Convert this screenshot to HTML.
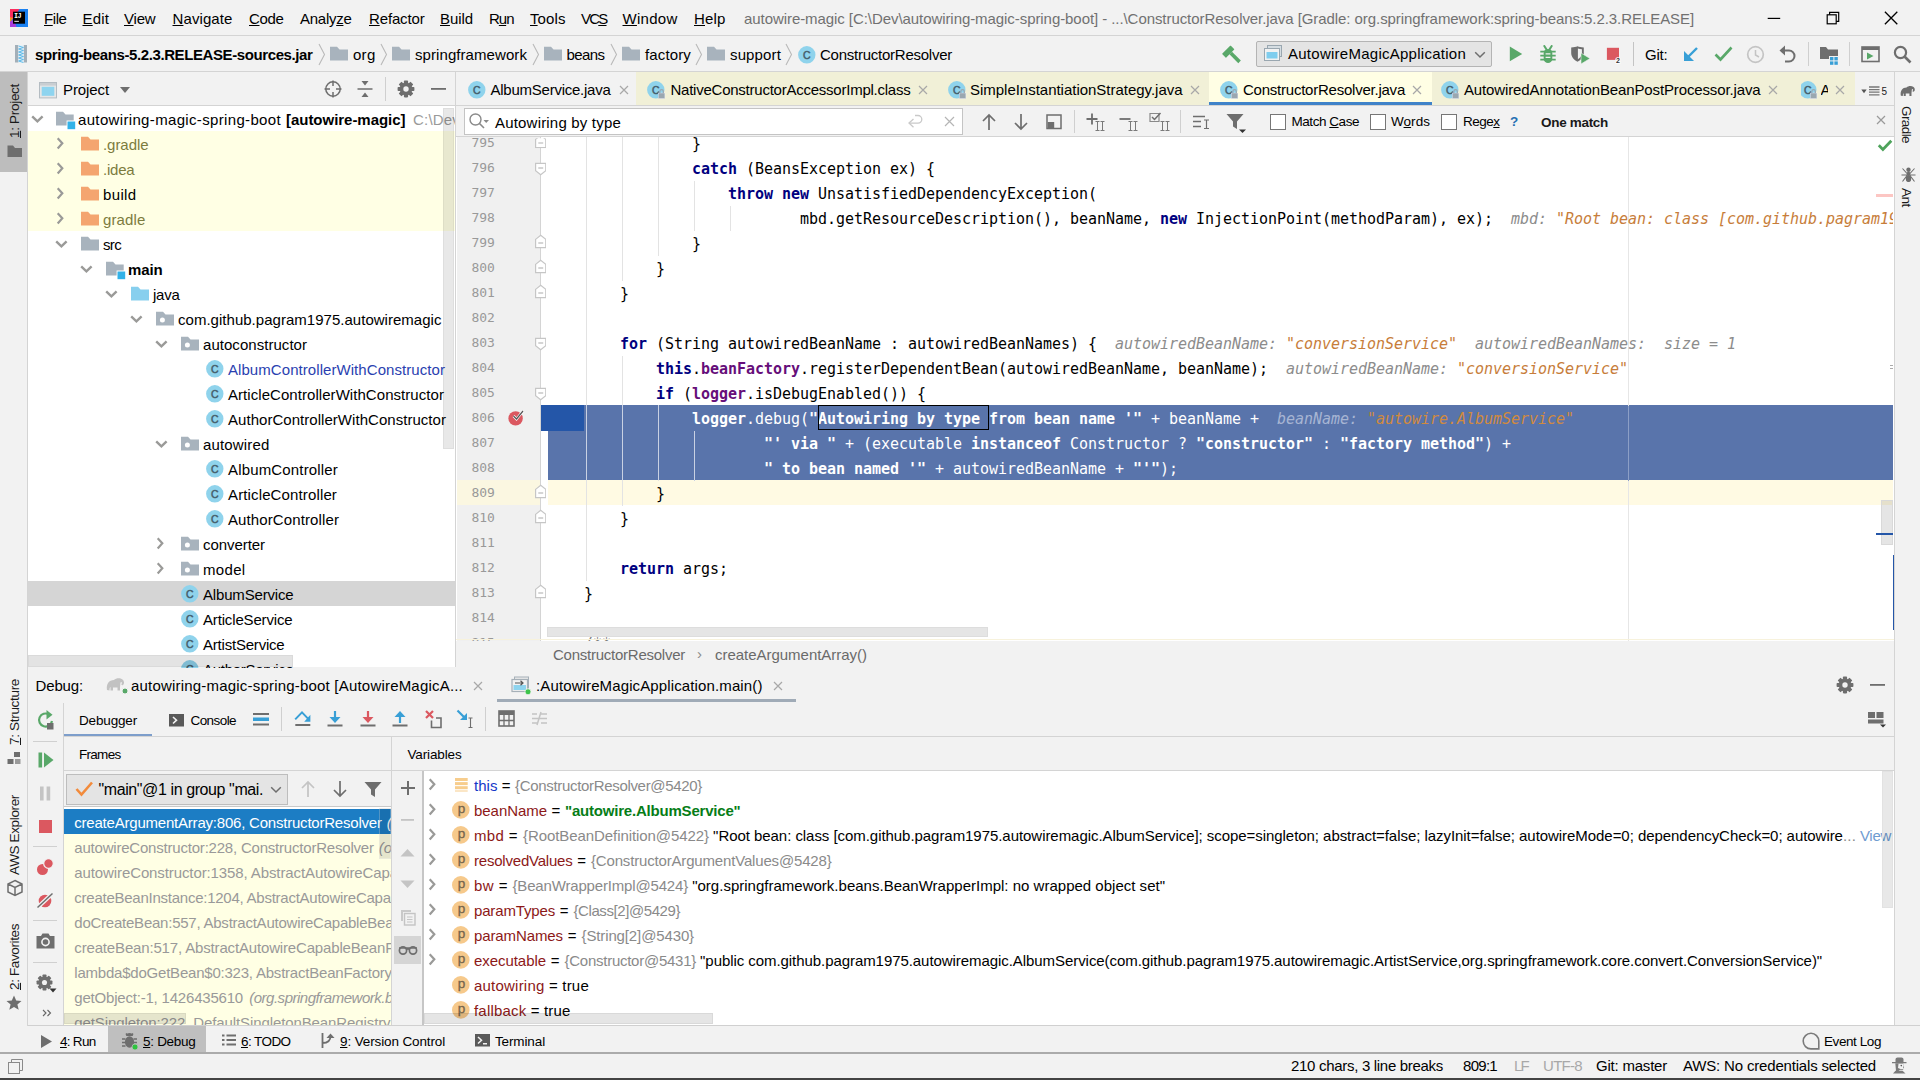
<!DOCTYPE html>
<html><head><meta charset="utf-8"><title>IntelliJ IDEA</title>
<style>
html,body{margin:0;padding:0;}
body{width:1920px;height:1080px;overflow:hidden;background:#f2f2f2;position:relative;font-family:'Liberation Sans', sans-serif;font-size:15px;}
body>div,body>svg{position:absolute;}
.t{white-space:pre;}
u{text-decoration:underline;text-underline-offset:0.8px;text-decoration-thickness:1px;}
</style></head><body>
<div style="left:0px;top:0px;width:1920px;height:36px;background:#f2f2f2;"></div>
<div style="left:0px;top:35px;width:1920px;height:1px;background:#d4d4d4;"></div>
<svg style="left:10px;top:9px;" width="18" height="18" viewBox="0 0 18 18"><rect width="18" height="18" fill="#1a80f0"/><path d="M0 0 H9.5 L5 7 L0 13 Z" fill="#fb2c5e"/><path d="M0 8 L3 9 L0 14 Z" fill="#f98c1e"/><path d="M0 12.5 L4 11 L6.5 18 H0 Z" fill="#a73ddc"/><rect x="3" y="2.7" width="12" height="12" fill="#000"/><rect x="4.3" y="11.8" width="4.6" height="1.1" fill="#ddd"/><text x="4" y="9.3" font-size="6.8" font-weight="bold" fill="#fff" font-family="Liberation Mono, monospace" letter-spacing="-0.6">IJ</text></svg>
<div class="t" style="left:44px;top:8.5px;height:20px;line-height:20px;font-size:15px;color:#000;letter-spacing:-0.418px;"><u>F</u>ile</div>
<div class="t" style="left:82.5px;top:8.5px;height:20px;line-height:20px;font-size:15px;color:#000;letter-spacing:0.16px;"><u>E</u>dit</div>
<div class="t" style="left:124px;top:8.5px;height:20px;line-height:20px;font-size:15px;color:#000;letter-spacing:-0.188px;"><u>V</u>iew</div>
<div class="t" style="left:172.5px;top:8.5px;height:20px;line-height:20px;font-size:15px;color:#000;letter-spacing:0.1px;"><u>N</u>avigate</div>
<div class="t" style="left:249px;top:8.5px;height:20px;line-height:20px;font-size:15px;color:#000;letter-spacing:-0.34px;"><u>C</u>ode</div>
<div class="t" style="left:300px;top:8.5px;height:20px;line-height:20px;font-size:15px;color:#000;letter-spacing:-0.268px;">Analy<u>z</u>e</div>
<div class="t" style="left:369px;top:8.5px;height:20px;line-height:20px;font-size:15px;color:#000;letter-spacing:-0.15px;"><u>R</u>efactor</div>
<div class="t" style="left:440px;top:8.5px;height:20px;line-height:20px;font-size:15px;color:#000;letter-spacing:-0.072px;"><u>B</u>uild</div>
<div class="t" style="left:489px;top:8.5px;height:20px;line-height:20px;font-size:15px;color:#000;letter-spacing:-1.01px;">R<u>u</u>n</div>
<div class="t" style="left:530px;top:8.5px;height:20px;line-height:20px;font-size:15px;color:#000;letter-spacing:0.094px;"><u>T</u>ools</div>
<div class="t" style="left:581px;top:8.5px;height:20px;line-height:20px;font-size:15px;color:#000;letter-spacing:-1.781px;">VC<u>S</u></div>
<div class="t" style="left:622.5px;top:8.5px;height:20px;line-height:20px;font-size:15px;color:#000;letter-spacing:0.273px;"><u>W</u>indow</div>
<div class="t" style="left:694px;top:8.5px;height:20px;line-height:20px;font-size:15px;color:#000;letter-spacing:0.16px;"><u>H</u>elp</div>
<div class="t" style="left:744px;top:8.5px;height:20px;line-height:20px;font-size:15px;color:#717171;letter-spacing:-0.068px;">autowire-magic [C:\Dev\autowiring-magic-spring-boot] - ...\ConstructorResolver.java [Gradle: org.springframework:spring-beans:5.2.3.RELEASE]</div>
<svg style="left:1767px;top:17px;" width="14" height="3" viewBox="0 0 14 3"><path d="M0.7 1.4 H13.2" stroke="#000" stroke-width="1.2"/></svg>
<svg style="left:1826px;top:11px;" width="14" height="14" viewBox="0 0 14 14"><rect x="1.2" y="3.8" width="9" height="9" fill="none" stroke="#000" stroke-width="1.2"/><path d="M3.6 3.8 V1.3 H12.7 V10.4 H10.2" fill="none" stroke="#000" stroke-width="1.2"/></svg>
<svg style="left:1884px;top:11px;" width="14" height="14" viewBox="0 0 14 14"><path d="M0.9 0.8 L13.3 13.2 M13.3 0.8 L0.9 13.2" stroke="#000" stroke-width="1.3"/></svg>
<div style="left:0px;top:36px;width:1920px;height:36px;background:#f2f2f2;"></div>
<div style="left:0px;top:71px;width:1920px;height:1px;background:#d4d4d4;"></div>
<svg style="left:15px;top:45.3px;" width="12" height="17.5" viewBox="0 0 12 17.5"><rect x="0" y="0" width="3.4" height="17.5" fill="#a3afb8"/><rect x="8.6" y="0" width="3.4" height="17.5" fill="#a3afb8"/><rect x="3.4" y="0" width="5.2" height="17.5" fill="#e4f1f8"/><path d="M3.6 1 L8.4 2.5 M3.6 4 L8.4 2.5 M3.6 4 L8.4 5.5 M3.6 7 L8.4 5.5 M3.6 7 L8.4 8.5 M3.6 10 L8.4 8.5 M3.6 10 L8.4 11.5 M3.6 13 L8.4 11.5 M3.6 13 L8.4 14.5 M3.6 16 L8.4 14.5 M3.6 16 L8.4 17.5" stroke="#4fb3e6" stroke-width="0.9" fill="none"/></svg>
<div class="t" style="left:35px;top:44.5px;height:20px;line-height:20px;font-size:15px;color:#000;font-weight:bold;letter-spacing:-0.398px;">spring-beans-5.2.3.RELEASE-sources.jar</div>
<svg style="left:317.5px;top:43px;" width="8" height="23" viewBox="0 0 8 23"><path d="M1 1 L6.5 11.5 L1 22" fill="none" stroke="#b9b9b9" stroke-width="1.1"/></svg>
<svg style="left:330px;top:46.1px;" width="18" height="15" viewBox="0 0 18 15"><path d="M0 0.8 H7 L9.5 3.4 H18 V14.5 H0 Z" fill="#a8b3bd"/></svg>
<div class="t" style="left:353px;top:44.5px;height:20px;line-height:20px;font-size:15px;color:#000;letter-spacing:0.271px;">org</div>
<svg style="left:380px;top:43px;" width="8" height="23" viewBox="0 0 8 23"><path d="M1 1 L6.5 11.5 L1 22" fill="none" stroke="#b9b9b9" stroke-width="1.1"/></svg>
<svg style="left:392px;top:46.1px;" width="18" height="15" viewBox="0 0 18 15"><path d="M0 0.8 H7 L9.5 3.4 H18 V14.5 H0 Z" fill="#a8b3bd"/></svg>
<div class="t" style="left:415px;top:44.5px;height:20px;line-height:20px;font-size:15px;color:#000;letter-spacing:0.075px;">springframework</div>
<svg style="left:532px;top:43px;" width="8" height="23" viewBox="0 0 8 23"><path d="M1 1 L6.5 11.5 L1 22" fill="none" stroke="#b9b9b9" stroke-width="1.1"/></svg>
<svg style="left:544px;top:46.1px;" width="18" height="15" viewBox="0 0 18 15"><path d="M0 0.8 H7 L9.5 3.4 H18 V14.5 H0 Z" fill="#a8b3bd"/></svg>
<div class="t" style="left:566.5px;top:44.5px;height:20px;line-height:20px;font-size:15px;color:#000;letter-spacing:-0.575px;">beans</div>
<svg style="left:610px;top:43px;" width="8" height="23" viewBox="0 0 8 23"><path d="M1 1 L6.5 11.5 L1 22" fill="none" stroke="#b9b9b9" stroke-width="1.1"/></svg>
<svg style="left:622px;top:46.1px;" width="18" height="15" viewBox="0 0 18 15"><path d="M0 0.8 H7 L9.5 3.4 H18 V14.5 H0 Z" fill="#a8b3bd"/></svg>
<div class="t" style="left:645px;top:44.5px;height:20px;line-height:20px;font-size:15px;color:#000;letter-spacing:0.141px;">factory</div>
<svg style="left:695px;top:43px;" width="8" height="23" viewBox="0 0 8 23"><path d="M1 1 L6.5 11.5 L1 22" fill="none" stroke="#b9b9b9" stroke-width="1.1"/></svg>
<svg style="left:707px;top:46.1px;" width="18" height="15" viewBox="0 0 18 15"><path d="M0 0.8 H7 L9.5 3.4 H18 V14.5 H0 Z" fill="#a8b3bd"/></svg>
<div class="t" style="left:730px;top:44.5px;height:20px;line-height:20px;font-size:15px;color:#000;letter-spacing:0.136px;">support</div>
<svg style="left:785px;top:43px;" width="8" height="23" viewBox="0 0 8 23"><path d="M1 1 L6.5 11.5 L1 22" fill="none" stroke="#b9b9b9" stroke-width="1.1"/></svg>
<svg style="left:797.5px;top:45.5px;" width="19" height="18.5" viewBox="0 0 19 18.5"><circle cx="8.8" cy="8.8" r="8.7" fill="#8fd3ec"/><text x="8.7" y="12.6" font-family="Liberation Sans, sans-serif" font-size="10.5" text-anchor="middle" fill="#46606e" stroke="#46606e" stroke-width="0.5">C</text></svg>
<div class="t" style="left:820px;top:44.5px;height:20px;line-height:20px;font-size:15px;color:#000;letter-spacing:-0.248px;">ConstructorResolver</div>
<svg style="left:1222px;top:44px;" width="22" height="22" viewBox="0 0 22 22"><g transform="rotate(-45 11 11)"><rect x="4" y="2.5" width="12" height="5.5" rx="0.5" fill="#59a869"/><rect x="9" y="8" width="3.6" height="12.5" fill="#59a869"/></g></svg>
<div style="left:1256px;top:40.5px;width:236px;height:26.5px;background:#e4e4e4;border:1px solid #b4b4b4;box-sizing:border-box;border-radius:2px;"></div>
<svg style="left:1264px;top:45px;" width="19" height="18" viewBox="0 0 19 18"><rect x="3.5" y="0.5" width="14" height="11" fill="#d5dde2" stroke="#9aa7b0"/><rect x="0.5" y="3.5" width="15" height="12" fill="#f2f2f2" stroke="#9aa7b0"/><rect x="2.5" y="7" width="11" height="6.5" fill="#7fcdee"/></svg>
<div class="t" style="left:1288px;top:44.0px;height:20px;line-height:20px;font-size:15px;color:#000;letter-spacing:0.26px;">AutowireMagicApplication</div>
<svg style="left:1474px;top:50.5px;" width="12" height="8" viewBox="0 0 12 8"><path d="M1.2 1.2 L6 6 L10.8 1.2" fill="none" stroke="#6e6e6e" stroke-width="1.5"/></svg>
<svg style="left:1509px;top:46px;" width="14" height="16" viewBox="0 0 14 16"><path d="M0.8 0.6 L13.2 8 L0.8 15.3 Z" fill="#59a869"/></svg>
<svg style="left:1540px;top:45px;" width="16" height="18.5" viewBox="0 0 16 18.5"><rect x="3.7" y="4" width="8.6" height="14" rx="4.3" fill="#59a869"/><path d="M0.3 6.6 H15.7 M0.3 10.6 H15.7 M0.3 14.6 H15.7" stroke="#59a869" stroke-width="1.7"/><path d="M4.3 1 L6.6 4.6 M11.7 1 L9.4 4.6" stroke="#59a869" stroke-width="2" stroke-linecap="round"/><path d="M5.6 8.8 H10.4 M5.6 12.4 H10.4" stroke="#f2f2f2" stroke-width="1.3"/></svg>
<svg style="left:1571px;top:46px;" width="20" height="19" viewBox="0 0 20 19"><path d="M0.2 1.6 C3 1.4 5 0.9 6.5 0.3 C8 0.9 10 1.4 12.8 1.6 V7 C12.8 11 10 14 6.5 15.7 C3 14 0.2 11 0.2 7 Z" fill="#6e6e6e"/><path d="M6.9 2.6 C8.3 3 9.6 3.2 10.9 3.3 V7 C10.9 9.6 9.3 11.8 6.9 13.2 Z" fill="#f2f2f2"/><path d="M10 7 L19 12.5 L10 18 Z" fill="#59a869" stroke="#f2f2f2" stroke-width="0.6"/></svg>
<svg style="left:1606px;top:47px;" width="16" height="17" viewBox="0 0 16 17"><rect x="0.9" y="0.8" width="12.1" height="12.1" fill="#db5860"/><text x="10" y="16" font-size="7" font-weight="bold" fill="#333" stroke="#fff" stroke-width="1.6" paint-order="stroke" font-family="Liberation Sans, sans-serif">2</text></svg>
<div style="left:1633px;top:42px;width:1px;height:24px;background:#c4c4c4;"></div>
<div class="t" style="left:1645px;top:44.5px;height:20px;line-height:20px;font-size:15px;color:#000;letter-spacing:-0.211px;">Git:</div>
<svg style="left:1682px;top:46px;" width="17" height="17" viewBox="0 0 17 17"><path d="M15 2 L3.5 13.5" stroke="#389fd6" stroke-width="2.4"/><path d="M2 5 V15 H12 Z" fill="#389fd6"/></svg>
<svg style="left:1714px;top:46px;" width="19" height="16" viewBox="0 0 19 16"><path d="M1.5 8.5 L6.5 13.5 L17.5 1.5" fill="none" stroke="#59a869" stroke-width="2.6"/></svg>
<svg style="left:1746px;top:45px;" width="19" height="19" viewBox="0 0 19 19"><circle cx="9.5" cy="9.5" r="7.8" fill="none" stroke="#c4c4c4" stroke-width="1.7"/><path d="M9.5 5 V10 L13 12" fill="none" stroke="#c4c4c4" stroke-width="1.5"/></svg>
<svg style="left:1778px;top:45px;" width="20" height="19" viewBox="0 0 20 19"><path d="M4.5 5.5 H11 a5.5 5.5 0 0 1 0 11 H7" fill="none" stroke="#6e6e6e" stroke-width="2"/><path d="M7 0.5 L1.5 5.5 L7 10.5 Z" fill="#6e6e6e"/></svg>
<div style="left:1808px;top:42px;width:1px;height:24px;background:#cfcfcf;"></div>
<svg style="left:1820px;top:46px;" width="20" height="19" viewBox="0 0 20 19"><path d="M0 1 H6 L8 3.5 H18 V10 H9 V13 H0 Z" fill="#6e6e6e"/><rect x="10" y="11" width="3.4" height="3.4" fill="#389fd6"/><rect x="14.4" y="11" width="3.4" height="3.4" fill="#389fd6"/><rect x="10" y="15.4" width="3.4" height="3.4" fill="#389fd6"/><rect x="14.4" y="15.4" width="3.4" height="3.4" fill="#389fd6"/></svg>
<div style="left:1849px;top:42px;width:1px;height:24px;background:#cfcfcf;"></div>
<svg style="left:1861px;top:46px;" width="19" height="17" viewBox="0 0 19 17"><rect x="1" y="1" width="17" height="14.5" fill="none" stroke="#6e6e6e" stroke-width="1.6"/><rect x="1" y="1" width="17" height="3" fill="#6e6e6e"/><path d="M6 6.5 L12.5 10 L6 13.5 Z" fill="#59a869"/></svg>
<svg style="left:1893px;top:45px;" width="19" height="19" viewBox="0 0 19 19"><circle cx="7.5" cy="7.5" r="5.6" fill="none" stroke="#6e6e6e" stroke-width="2.2"/><path d="M11.5 11.5 L17.5 17.5" stroke="#6e6e6e" stroke-width="2.6"/></svg>
<div style="left:0px;top:72px;width:27px;height:954px;background:#f2f2f2;"></div>
<div style="left:27px;top:72px;width:1px;height:954px;background:#d4d4d4;"></div>
<div style="left:0px;top:72px;width:27px;height:100px;background:#bdbdbd;"></div>
<div class="t" style="left:0px;top:-10.0px;height:20px;line-height:20px;font-size:13.5px;color:#1a1a1a;letter-spacing:-0.303px;left:14.5px;top:137.5px;transform-origin:0 0;transform:rotate(-90deg) translate(0,-10px);"><u>1</u>: Project</div>
<svg style="left:7px;top:144.5px;" width="16" height="13" viewBox="0 0 16 13"><path d="M0.5 0.5 H6 L8 3 H15 V12 H0.5 Z" fill="#6e6e6e"/></svg>
<div class="t" style="left:0px;top:-10.0px;height:20px;line-height:20px;font-size:13.5px;color:#1a1a1a;letter-spacing:-0.315px;left:14.5px;top:745px;transform-origin:0 0;transform:rotate(-90deg) translate(0,-10px);"><u>7</u>: Structure</div>
<svg style="left:7px;top:752px;" width="14" height="12" viewBox="0 0 14 12"><rect x="7" y="0" width="6" height="5" fill="#6e6e6e"/><rect x="0.5" y="7" width="6" height="5" fill="#6e6e6e"/><rect x="8" y="7" width="5.5" height="5" fill="#9a9a9a"/></svg>
<div class="t" style="left:0px;top:-10.0px;height:20px;line-height:20px;font-size:13.5px;color:#1a1a1a;letter-spacing:-0.357px;left:14.5px;top:874.5px;transform-origin:0 0;transform:rotate(-90deg) translate(0,-10px);">AWS Explorer</div>
<svg style="left:5.5px;top:878.5px;" width="18" height="18" viewBox="0 0 18 18"><path d="M9 1.5 L16 5 V13 L9 16.5 L2 13 V5 Z M2 5 L9 8.5 L16 5 M9 8.5 V16.5" fill="none" stroke="#6e6e6e" stroke-width="1.5"/></svg>
<div class="t" style="left:0px;top:-10.0px;height:20px;line-height:20px;font-size:13.5px;color:#1a1a1a;letter-spacing:-0.378px;left:14.5px;top:990px;transform-origin:0 0;transform:rotate(-90deg) translate(0,-10px);"><u>2</u>: Favorites</div>
<svg style="left:6px;top:995px;" width="16" height="15" viewBox="0 0 16 15"><path d="M8 0.5 L10.2 5.5 L15.5 6 L11.4 9.5 L12.7 14.8 L8 12 L3.3 14.8 L4.6 9.5 L0.5 6 L5.8 5.5 Z" fill="#6e6e6e"/></svg>
<div style="left:28px;top:72px;width:427px;height:34px;background:#f2f2f2;"></div>
<div style="left:28px;top:105px;width:428px;height:1px;background:#d4d4d4;"></div>
<div style="left:455px;top:72px;width:1px;height:595px;background:#d4d4d4;"></div>
<div style="left:28px;top:106px;width:427px;height:561px;background:#fff;"></div>
<svg style="left:39px;top:81.5px;" width="18" height="17" viewBox="0 0 18 17"><rect x="0.5" y="0.5" width="17" height="15.4" fill="#e6e6e6" stroke="#b4bcc2"/><rect x="1" y="1" width="16" height="2.6" fill="#c9ced2"/><rect x="2.7" y="4.8" width="12.6" height="9" fill="#8ed4ef"/></svg>
<div class="t" style="left:63px;top:79.5px;height:20px;line-height:20px;font-size:15px;color:#000;letter-spacing:-0.098px;">Project</div>
<svg style="left:119px;top:86px;" width="12" height="8" viewBox="0 0 12 8"><path d="M1 1 H11 L6 7 Z" fill="#6e6e6e"/></svg>
<svg style="left:324px;top:80px;" width="18" height="18" viewBox="0 0 18 18"><circle cx="9" cy="9" r="7.2" fill="none" stroke="#6e6e6e" stroke-width="1.5"/><path d="M9 0.5 V6 M9 12 V17.5 M0.5 9 H6 M12 9 H17.5" stroke="#6e6e6e" stroke-width="1.5"/></svg>
<svg style="left:357px;top:80px;" width="16" height="18" viewBox="0 0 16 18"><path d="M0.5 9 H15.5" stroke="#6e6e6e" stroke-width="1.5"/><path d="M4.5 1 H11.5 L8 5.5 Z M4.5 17 H11.5 L8 12.5 Z" fill="#6e6e6e"/></svg>
<div style="left:385px;top:77px;width:1px;height:24px;background:#cfcfcf;"></div>
<svg style="left:397px;top:80px;" width="18" height="18" viewBox="0 0 18 18"><rect x="6.9" y="0.6" width="4.2" height="16.8" rx="0.8" transform="rotate(0 9 9)" fill="#6e6e6e"/><rect x="6.9" y="0.6" width="4.2" height="16.8" rx="0.8" transform="rotate(45 9 9)" fill="#6e6e6e"/><rect x="6.9" y="0.6" width="4.2" height="16.8" rx="0.8" transform="rotate(90 9 9)" fill="#6e6e6e"/><rect x="6.9" y="0.6" width="4.2" height="16.8" rx="0.8" transform="rotate(135 9 9)" fill="#6e6e6e"/><circle cx="9" cy="9" r="6.4" fill="#6e6e6e"/><circle cx="9" cy="9" r="2.7" fill="#f2f2f2"/></svg>
<svg style="left:431px;top:88px;" width="16" height="3" viewBox="0 0 16 3"><rect width="15" height="1.8" fill="#6e6e6e"/></svg>
<div style="left:28px;top:131.2px;width:427px;height:100px;background:#ffffe4;"></div>
<div style="left:28px;top:581.2px;width:427px;height:24.5px;background:#d5d5d5;"></div>
<svg style="left:30.6px;top:114.8px;" width="13" height="8.5" viewBox="0 0 13 8.5"><path d="M1.2 1.3 L6.4 6.3 L11.6 1.3" fill="none" stroke="#9a9a98" stroke-width="2.4"/></svg>
<svg style="left:56px;top:110.7px;" width="20" height="19" viewBox="0 0 20 19"><path d="M0 0.8 H7 L9.5 3.4 H17.7 V9.6 H10.6 V14.5 H0 Z" fill="#a8b3bd"/><rect x="11.5" y="10.5" width="7.7" height="7.7" fill="#33b2e8"/></svg>
<div class="t" style="left:78px;top:109.5px;height:20px;line-height:20px;font-size:15px;color:#000;letter-spacing:0.342px;">autowiring-magic-spring-boot</div>
<div class="t" style="left:286px;top:109.5px;height:20px;line-height:20px;font-size:15px;color:#000;font-weight:bold;letter-spacing:-0.032px;">[autowire-magic]</div>
<div class="t" style="left:413px;top:109.5px;height:20px;line-height:20px;font-size:15px;color:#9a9a9a;letter-spacing:0.193px;width:42px;overflow:hidden;">C:\Dev</div>
<svg style="left:56.4px;top:136.9px;" width="9" height="13" viewBox="0 0 9 13"><path d="M1.7 1.2 L6.3 6.3 L1.7 11.4" fill="none" stroke="#9a9a98" stroke-width="2.2"/></svg>
<svg style="left:81px;top:135.5px;" width="18" height="15" viewBox="0 0 18 15"><path d="M0 0.8 H7 L9.5 3.4 H18 V14.5 H0 Z" fill="#f4a56f"/></svg>
<div class="t" style="left:103px;top:134.5px;height:20px;line-height:20px;font-size:15px;color:#7c7c3e;letter-spacing:-0.054px;">.gradle</div>
<svg style="left:56.4px;top:161.9px;" width="9" height="13" viewBox="0 0 9 13"><path d="M1.7 1.2 L6.3 6.3 L1.7 11.4" fill="none" stroke="#9a9a98" stroke-width="2.2"/></svg>
<svg style="left:81px;top:160.5px;" width="18" height="15" viewBox="0 0 18 15"><path d="M0 0.8 H7 L9.5 3.4 H18 V14.5 H0 Z" fill="#f4a56f"/></svg>
<div class="t" style="left:103px;top:159.5px;height:20px;line-height:20px;font-size:15px;color:#7c7c3e;letter-spacing:-0.206px;">.idea</div>
<svg style="left:56.4px;top:186.9px;" width="9" height="13" viewBox="0 0 9 13"><path d="M1.7 1.2 L6.3 6.3 L1.7 11.4" fill="none" stroke="#9a9a98" stroke-width="2.2"/></svg>
<svg style="left:81px;top:185.5px;" width="18" height="15" viewBox="0 0 18 15"><path d="M0 0.8 H7 L9.5 3.4 H18 V14.5 H0 Z" fill="#f4a56f"/></svg>
<div class="t" style="left:103px;top:184.5px;height:20px;line-height:20px;font-size:15px;color:#000;letter-spacing:0.359px;">build</div>
<svg style="left:56.4px;top:211.9px;" width="9" height="13" viewBox="0 0 9 13"><path d="M1.7 1.2 L6.3 6.3 L1.7 11.4" fill="none" stroke="#9a9a98" stroke-width="2.2"/></svg>
<svg style="left:81px;top:210.5px;" width="18" height="15" viewBox="0 0 18 15"><path d="M0 0.8 H7 L9.5 3.4 H18 V14.5 H0 Z" fill="#f4a56f"/></svg>
<div class="t" style="left:103px;top:209.5px;height:20px;line-height:20px;font-size:15px;color:#7c7c3e;letter-spacing:0.133px;">gradle</div>
<svg style="left:54.6px;top:239.8px;" width="13" height="8.5" viewBox="0 0 13 8.5"><path d="M1.2 1.3 L6.4 6.3 L11.6 1.3" fill="none" stroke="#9a9a98" stroke-width="2.4"/></svg>
<svg style="left:81px;top:235.5px;" width="18" height="15" viewBox="0 0 18 15"><path d="M0 0.8 H7 L9.5 3.4 H18 V14.5 H0 Z" fill="#a8b3bd"/></svg>
<div class="t" style="left:103px;top:234.5px;height:20px;line-height:20px;font-size:15px;color:#000;letter-spacing:-0.667px;">src</div>
<svg style="left:79.6px;top:264.8px;" width="13" height="8.5" viewBox="0 0 13 8.5"><path d="M1.2 1.3 L6.4 6.3 L11.6 1.3" fill="none" stroke="#9a9a98" stroke-width="2.4"/></svg>
<svg style="left:106px;top:260.7px;" width="20" height="19" viewBox="0 0 20 19"><path d="M0 0.8 H7 L9.5 3.4 H17.7 V9.6 H10.6 V14.5 H0 Z" fill="#a8b3bd"/><rect x="11.5" y="10.5" width="7.7" height="7.7" fill="#33b2e8"/></svg>
<div class="t" style="left:128px;top:259.5px;height:20px;line-height:20px;font-size:15px;color:#000;font-weight:bold;letter-spacing:-0.129px;">main</div>
<svg style="left:104.6px;top:289.8px;" width="13" height="8.5" viewBox="0 0 13 8.5"><path d="M1.2 1.3 L6.4 6.3 L11.6 1.3" fill="none" stroke="#9a9a98" stroke-width="2.4"/></svg>
<svg style="left:131px;top:285.5px;" width="18" height="15" viewBox="0 0 18 15"><path d="M0 0.8 H7 L9.5 3.4 H18 V14.5 H0 Z" fill="#87cfee"/></svg>
<div class="t" style="left:153px;top:284.5px;height:20px;line-height:20px;font-size:15px;color:#000;letter-spacing:-0.258px;">java</div>
<svg style="left:129.6px;top:314.8px;" width="13" height="8.5" viewBox="0 0 13 8.5"><path d="M1.2 1.3 L6.4 6.3 L11.6 1.3" fill="none" stroke="#9a9a98" stroke-width="2.4"/></svg>
<svg style="left:156px;top:310.5px;" width="18" height="15" viewBox="0 0 18 15"><path d="M0 0.8 H7 L9.5 3.4 H18 V14.5 H0 Z" fill="#a8b3bd"/><circle cx="6.4" cy="9" r="2.5" fill="#fff"/></svg>
<div class="t" style="left:178px;top:309.5px;height:20px;line-height:20px;font-size:15px;color:#000;letter-spacing:0.024px;">com.github.pagram1975.autowiremagic</div>
<svg style="left:154.6px;top:339.8px;" width="13" height="8.5" viewBox="0 0 13 8.5"><path d="M1.2 1.3 L6.4 6.3 L11.6 1.3" fill="none" stroke="#9a9a98" stroke-width="2.4"/></svg>
<svg style="left:181px;top:335.5px;" width="18" height="15" viewBox="0 0 18 15"><path d="M0 0.8 H7 L9.5 3.4 H18 V14.5 H0 Z" fill="#a8b3bd"/><circle cx="6.4" cy="9" r="2.5" fill="#fff"/></svg>
<div class="t" style="left:203px;top:334.5px;height:20px;line-height:20px;font-size:15px;color:#000;letter-spacing:0.041px;">autoconstructor</div>
<svg style="left:206.2px;top:359.7px;" width="19" height="18.5" viewBox="0 0 19 18.5"><circle cx="8.8" cy="8.8" r="8.7" fill="#8fd3ec"/><text x="8.7" y="12.6" font-family="Liberation Sans, sans-serif" font-size="10.5" text-anchor="middle" fill="#46606e" stroke="#46606e" stroke-width="0.5">C</text></svg>
<div class="t" style="left:228px;top:359.5px;height:20px;line-height:20px;font-size:15px;color:#2a3fb0;letter-spacing:0.064px;">AlbumControllerWithConstructor</div>
<svg style="left:206.2px;top:384.7px;" width="19" height="18.5" viewBox="0 0 19 18.5"><circle cx="8.8" cy="8.8" r="8.7" fill="#8fd3ec"/><text x="8.7" y="12.6" font-family="Liberation Sans, sans-serif" font-size="10.5" text-anchor="middle" fill="#46606e" stroke="#46606e" stroke-width="0.5">C</text></svg>
<div class="t" style="left:228px;top:384.5px;height:20px;line-height:20px;font-size:15px;color:#000;letter-spacing:0.055px;">ArticleControllerWithConstructor</div>
<svg style="left:206.2px;top:409.7px;" width="19" height="18.5" viewBox="0 0 19 18.5"><circle cx="8.8" cy="8.8" r="8.7" fill="#8fd3ec"/><text x="8.7" y="12.6" font-family="Liberation Sans, sans-serif" font-size="10.5" text-anchor="middle" fill="#46606e" stroke="#46606e" stroke-width="0.5">C</text></svg>
<div class="t" style="left:228px;top:409.5px;height:20px;line-height:20px;font-size:15px;color:#000;letter-spacing:0.04px;">AuthorControllerWithConstructor</div>
<svg style="left:154.6px;top:439.8px;" width="13" height="8.5" viewBox="0 0 13 8.5"><path d="M1.2 1.3 L6.4 6.3 L11.6 1.3" fill="none" stroke="#9a9a98" stroke-width="2.4"/></svg>
<svg style="left:181px;top:435.5px;" width="18" height="15" viewBox="0 0 18 15"><path d="M0 0.8 H7 L9.5 3.4 H18 V14.5 H0 Z" fill="#a8b3bd"/><circle cx="6.4" cy="9" r="2.5" fill="#fff"/></svg>
<div class="t" style="left:203px;top:434.5px;height:20px;line-height:20px;font-size:15px;color:#000;letter-spacing:0.161px;">autowired</div>
<svg style="left:206.2px;top:459.7px;" width="19" height="18.5" viewBox="0 0 19 18.5"><circle cx="8.8" cy="8.8" r="8.7" fill="#8fd3ec"/><text x="8.7" y="12.6" font-family="Liberation Sans, sans-serif" font-size="10.5" text-anchor="middle" fill="#46606e" stroke="#46606e" stroke-width="0.5">C</text></svg>
<div class="t" style="left:228px;top:459.5px;height:20px;line-height:20px;font-size:15px;color:#000;letter-spacing:0.164px;">AlbumController</div>
<svg style="left:206.2px;top:484.7px;" width="19" height="18.5" viewBox="0 0 19 18.5"><circle cx="8.8" cy="8.8" r="8.7" fill="#8fd3ec"/><text x="8.7" y="12.6" font-family="Liberation Sans, sans-serif" font-size="10.5" text-anchor="middle" fill="#46606e" stroke="#46606e" stroke-width="0.5">C</text></svg>
<div class="t" style="left:228px;top:484.5px;height:20px;line-height:20px;font-size:15px;color:#000;letter-spacing:0.135px;">ArticleController</div>
<svg style="left:206.2px;top:509.7px;" width="19" height="18.5" viewBox="0 0 19 18.5"><circle cx="8.8" cy="8.8" r="8.7" fill="#8fd3ec"/><text x="8.7" y="12.6" font-family="Liberation Sans, sans-serif" font-size="10.5" text-anchor="middle" fill="#46606e" stroke="#46606e" stroke-width="0.5">C</text></svg>
<div class="t" style="left:228px;top:509.5px;height:20px;line-height:20px;font-size:15px;color:#000;letter-spacing:0.111px;">AuthorController</div>
<svg style="left:156.4px;top:536.9px;" width="9" height="13" viewBox="0 0 9 13"><path d="M1.7 1.2 L6.3 6.3 L1.7 11.4" fill="none" stroke="#9a9a98" stroke-width="2.2"/></svg>
<svg style="left:181px;top:535.5px;" width="18" height="15" viewBox="0 0 18 15"><path d="M0 0.8 H7 L9.5 3.4 H18 V14.5 H0 Z" fill="#a8b3bd"/><circle cx="6.4" cy="9" r="2.5" fill="#fff"/></svg>
<div class="t" style="left:203px;top:534.5px;height:20px;line-height:20px;font-size:15px;color:#000;letter-spacing:-0.059px;">converter</div>
<svg style="left:156.4px;top:561.9px;" width="9" height="13" viewBox="0 0 9 13"><path d="M1.7 1.2 L6.3 6.3 L1.7 11.4" fill="none" stroke="#9a9a98" stroke-width="2.2"/></svg>
<svg style="left:181px;top:560.5px;" width="18" height="15" viewBox="0 0 18 15"><path d="M0 0.8 H7 L9.5 3.4 H18 V14.5 H0 Z" fill="#a8b3bd"/><circle cx="6.4" cy="9" r="2.5" fill="#fff"/></svg>
<div class="t" style="left:203px;top:559.5px;height:20px;line-height:20px;font-size:15px;color:#000;letter-spacing:0.328px;">model</div>
<svg style="left:181.2px;top:584.7px;" width="19" height="18.5" viewBox="0 0 19 18.5"><circle cx="8.8" cy="8.8" r="8.7" fill="#8fd3ec"/><text x="8.7" y="12.6" font-family="Liberation Sans, sans-serif" font-size="10.5" text-anchor="middle" fill="#46606e" stroke="#46606e" stroke-width="0.5">C</text></svg>
<div class="t" style="left:203px;top:584.5px;height:20px;line-height:20px;font-size:15px;color:#000;letter-spacing:-0.171px;">AlbumService</div>
<svg style="left:181.2px;top:609.7px;" width="19" height="18.5" viewBox="0 0 19 18.5"><circle cx="8.8" cy="8.8" r="8.7" fill="#8fd3ec"/><text x="8.7" y="12.6" font-family="Liberation Sans, sans-serif" font-size="10.5" text-anchor="middle" fill="#46606e" stroke="#46606e" stroke-width="0.5">C</text></svg>
<div class="t" style="left:203px;top:609.5px;height:20px;line-height:20px;font-size:15px;color:#000;letter-spacing:-0.157px;">ArticleService</div>
<svg style="left:181.2px;top:634.7px;" width="19" height="18.5" viewBox="0 0 19 18.5"><circle cx="8.8" cy="8.8" r="8.7" fill="#8fd3ec"/><text x="8.7" y="12.6" font-family="Liberation Sans, sans-serif" font-size="10.5" text-anchor="middle" fill="#46606e" stroke="#46606e" stroke-width="0.5">C</text></svg>
<div class="t" style="left:203px;top:634.5px;height:20px;line-height:20px;font-size:15px;color:#000;letter-spacing:-0.207px;">ArtistService</div>
<svg style="left:181.2px;top:659.7px;" width="19" height="18.5" viewBox="0 0 19 18.5"><circle cx="8.8" cy="8.8" r="8.7" fill="#8fd3ec"/><text x="8.7" y="12.6" font-family="Liberation Sans, sans-serif" font-size="10.5" text-anchor="middle" fill="#46606e" stroke="#46606e" stroke-width="0.5">C</text></svg>
<div class="t" style="left:203px;top:659.5px;height:20px;line-height:20px;font-size:15px;color:#000;letter-spacing:-0.286px;">AuthorService</div>
<div style="left:28px;top:655.2px;width:265.4px;height:11.8px;background:rgba(0,0,0,0.11);border:1px solid rgba(0,0,0,0.04);box-sizing:border-box;"></div>
<div style="left:442.5px;top:108px;width:11.5px;height:341px;background:rgba(0,0,0,0.09);border:1px solid rgba(0,0,0,0.04);box-sizing:border-box;"></div>
<div style="left:28px;top:667.5px;width:1866px;height:1px;background:#d6d6d6;"></div>
<div style="left:456px;top:72px;width:1438px;height:34px;background:#f2f2f2;"></div>
<div style="left:636px;top:72px;width:573px;height:33px;background:#f1f0d7;"></div>
<div style="left:1209px;top:72px;width:223px;height:33px;background:#fffee4;"></div>
<div style="left:1432px;top:72px;width:423px;height:33px;background:#f1f0d7;"></div>
<div style="left:1209px;top:102px;width:223px;height:3.7px;background:#4083c9;"></div>
<div style="left:456px;top:105px;width:1438px;height:1px;background:#d4d4d4;"></div>
<svg style="left:467.5px;top:80.5px;" width="19" height="18.5" viewBox="0 0 19 18.5"><circle cx="8.8" cy="8.8" r="8.7" fill="#8fd3ec"/><text x="8.7" y="12.6" font-family="Liberation Sans, sans-serif" font-size="10.5" text-anchor="middle" fill="#46606e" stroke="#46606e" stroke-width="0.5">C</text></svg>
<div class="t" style="left:490.5px;top:79.5px;height:20px;line-height:20px;font-size:15px;color:#000;letter-spacing:-0.248px;">AlbumService.java</div>
<svg style="left:618.5px;top:84.5px;" width="10" height="10" viewBox="0 0 10 10"><path d="M1 1 L9 9 M9 1 L1 9" stroke="#a8a8a8" stroke-width="1.2" fill="none"/></svg>
<svg style="left:647px;top:80.5px;" width="19" height="18.5" viewBox="0 0 19 18.5"><circle cx="8.8" cy="8.8" r="8.7" fill="#8fd3ec"/><text x="8.7" y="12.6" font-family="Liberation Sans, sans-serif" font-size="10.5" text-anchor="middle" fill="#46606e" stroke="#46606e" stroke-width="0.5">C</text><rect x="11.3" y="12" width="6.6" height="5.6" fill="#9aa7b0" stroke="#eef" stroke-width="0.4"/><path d="M12.9 12 V10.3 a1.7 1.7 0 0 1 3.4 0 V12" fill="none" stroke="#9aa7b0" stroke-width="1.2"/></svg>
<div class="t" style="left:670.5px;top:79.5px;height:20px;line-height:20px;font-size:15px;color:#000;letter-spacing:-0.241px;">NativeConstructorAccessorImpl.class</div>
<svg style="left:918px;top:84.5px;" width="10" height="10" viewBox="0 0 10 10"><path d="M1 1 L9 9 M9 1 L1 9" stroke="#a8a8a8" stroke-width="1.2" fill="none"/></svg>
<svg style="left:947.5px;top:80.5px;" width="19" height="18.5" viewBox="0 0 19 18.5"><circle cx="8.8" cy="8.8" r="8.7" fill="#8fd3ec"/><text x="8.7" y="12.6" font-family="Liberation Sans, sans-serif" font-size="10.5" text-anchor="middle" fill="#46606e" stroke="#46606e" stroke-width="0.5">C</text><rect x="11.3" y="12" width="6.6" height="5.6" fill="#9aa7b0" stroke="#eef" stroke-width="0.4"/><path d="M12.9 12 V10.3 a1.7 1.7 0 0 1 3.4 0 V12" fill="none" stroke="#9aa7b0" stroke-width="1.2"/></svg>
<div class="t" style="left:970px;top:79.5px;height:20px;line-height:20px;font-size:15px;color:#000;letter-spacing:-0.021px;">SimpleInstantiationStrategy.java</div>
<svg style="left:1190px;top:84.5px;" width="10" height="10" viewBox="0 0 10 10"><path d="M1 1 L9 9 M9 1 L1 9" stroke="#a8a8a8" stroke-width="1.2" fill="none"/></svg>
<svg style="left:1220px;top:80.5px;" width="19" height="18.5" viewBox="0 0 19 18.5"><circle cx="8.8" cy="8.8" r="8.7" fill="#8fd3ec"/><text x="8.7" y="12.6" font-family="Liberation Sans, sans-serif" font-size="10.5" text-anchor="middle" fill="#46606e" stroke="#46606e" stroke-width="0.5">C</text><rect x="11.3" y="12" width="6.6" height="5.6" fill="#9aa7b0" stroke="#eef" stroke-width="0.4"/><path d="M12.9 12 V10.3 a1.7 1.7 0 0 1 3.4 0 V12" fill="none" stroke="#9aa7b0" stroke-width="1.2"/></svg>
<div class="t" style="left:1243px;top:79.5px;height:20px;line-height:20px;font-size:15px;color:#000;letter-spacing:-0.232px;">ConstructorResolver.java</div>
<svg style="left:1411.5px;top:84.5px;" width="10" height="10" viewBox="0 0 10 10"><path d="M1 1 L9 9 M9 1 L1 9" stroke="#a8a8a8" stroke-width="1.2" fill="none"/></svg>
<svg style="left:1441px;top:80.5px;" width="19" height="18.5" viewBox="0 0 19 18.5"><circle cx="8.8" cy="8.8" r="8.7" fill="#8fd3ec"/><text x="8.7" y="12.6" font-family="Liberation Sans, sans-serif" font-size="10.5" text-anchor="middle" fill="#46606e" stroke="#46606e" stroke-width="0.5">C</text><rect x="11.3" y="12" width="6.6" height="5.6" fill="#9aa7b0" stroke="#eef" stroke-width="0.4"/><path d="M12.9 12 V10.3 a1.7 1.7 0 0 1 3.4 0 V12" fill="none" stroke="#9aa7b0" stroke-width="1.2"/></svg>
<div class="t" style="left:1464px;top:79.5px;height:20px;line-height:20px;font-size:15px;color:#000;letter-spacing:-0.131px;">AutowiredAnnotationBeanPostProcessor.java</div>
<svg style="left:1768px;top:84.5px;" width="10" height="10" viewBox="0 0 10 10"><path d="M1 1 L9 9 M9 1 L1 9" stroke="#a8a8a8" stroke-width="1.2" fill="none"/></svg>
<svg style="left:1799px;top:80.5px;" width="19" height="18.5" viewBox="0 0 19 18.5"><circle cx="8.8" cy="8.8" r="8.7" fill="#8fd3ec"/><text x="8.7" y="12.6" font-family="Liberation Sans, sans-serif" font-size="10.5" text-anchor="middle" fill="#46606e" stroke="#46606e" stroke-width="0.5">C</text><rect x="11.3" y="12" width="6.6" height="5.6" fill="#9aa7b0" stroke="#eef" stroke-width="0.4"/><path d="M12.9 12 V10.3 a1.7 1.7 0 0 1 3.4 0 V12" fill="none" stroke="#9aa7b0" stroke-width="1.2"/></svg>
<div class="t" style="left:1820.5px;top:79.5px;height:20px;line-height:20px;font-size:15px;color:#000;width:7.3px;overflow:hidden;">AbstractAutowireCapableBeanFactory.java</div>
<svg style="left:1835px;top:84.5px;" width="10" height="10" viewBox="0 0 10 10"><path d="M1 1 L9 9 M9 1 L1 9" stroke="#a8a8a8" stroke-width="1.2" fill="none"/></svg>
<div style="left:1796px;top:74px;width:5px;height:30px;background:#f1f0d7;"></div>
<svg style="left:1860.5px;top:88.5px;" width="7" height="5" viewBox="0 0 7 5"><path d="M0.3 0.5 H5.7 L3 4.3 Z" fill="#555"/></svg>
<svg style="left:1868.8px;top:85.5px;" width="11" height="10" viewBox="0 0 11 10"><path d="M0 1 H10.5 M0 3.6 H10.5 M0 6.2 H10.5 M0 8.8 H10.5" stroke="#777" stroke-width="1.3"/></svg>
<div class="t" style="left:1881.5px;top:86.0px;height:12px;line-height:12px;font-size:10px;color:#222;">5</div>
<div style="left:456px;top:106px;width:1438px;height:31px;background:#f2f2f2;"></div>
<div style="left:456px;top:136px;width:1438px;height:1px;background:#d4d4d4;"></div>
<div style="left:464px;top:107.5px;width:499px;height:27px;background:#fff;border:1px solid #c4c4c4;box-sizing:border-box;"></div>
<svg style="left:468px;top:112px;" width="22" height="18" viewBox="0 0 22 18"><circle cx="7.5" cy="7.5" r="5.5" fill="none" stroke="#8a8a8a" stroke-width="1.4"/><path d="M11.5 11.5 L16 16" stroke="#8a8a8a" stroke-width="1.6"/><path d="M15.5 8 H21 L18.2 11 Z" fill="#8a8a8a"/></svg>
<div class="t" style="left:495px;top:112.5px;height:20px;line-height:20px;font-size:15px;color:#000;letter-spacing:0.19px;">Autowiring by type</div>
<svg style="left:906px;top:113px;" width="18" height="16" viewBox="0 0 18 16"><path d="M9 2.5 H12 a3.8 3.8 0 0 1 0 7.6 H3.5" fill="none" stroke="#c9c9c9" stroke-width="1.3"/><path d="M7.5 6 L3 10.1 L7.5 14.2" fill="none" stroke="#c9c9c9" stroke-width="1.3"/></svg>
<svg style="left:944.0px;top:116.0px;" width="11.0" height="11.0" viewBox="0 0 11.0 11.0"><path d="M1 1 L10.0 10.0 M10.0 1 L1 10.0" stroke="#b5b5b5" stroke-width="1.2" fill="none"/></svg>
<svg style="left:981px;top:113px;" width="16" height="18" viewBox="0 0 16 18"><path d="M8 17 V2 M2 8 L8 2 L14 8" fill="none" stroke="#6e6e6e" stroke-width="1.7"/></svg>
<svg style="left:1013px;top:113px;" width="16" height="18" viewBox="0 0 16 18"><path d="M8 1 V16 M2 10 L8 16 L14 10" fill="none" stroke="#6e6e6e" stroke-width="1.7"/></svg>
<svg style="left:1046px;top:114px;" width="17" height="16" viewBox="0 0 17 16"><rect x="1" y="1" width="14" height="13.5" fill="none" stroke="#6e6e6e" stroke-width="1.5"/><rect x="1.7" y="8" width="6.5" height="6" fill="#6e6e6e"/></svg>
<div style="left:1074px;top:110px;width:1px;height:23px;background:#cfcfcf;"></div>
<svg style="left:1085px;top:112px;" width="22" height="20" viewBox="0 0 22 20"><path d="M1.5 7 H12.5 M7 1.5 V12.5" stroke="#6e6e6e" stroke-width="1.8"/><g stroke="#7a7a7a" stroke-width="1" fill="none"><path d="M12.5 9.5 V18.5 M10.5 9.5 H14.5 M10.5 18.5 H14.5"/><path d="M17.5 9.5 V18.5 M15.5 9.5 H19.5 M15.5 18.5 H19.5"/></g></svg>
<svg style="left:1118px;top:112px;" width="22" height="20" viewBox="0 0 22 20"><path d="M1.5 7 H12.5" stroke="#6e6e6e" stroke-width="1.8"/><g stroke="#7a7a7a" stroke-width="1" fill="none"><path d="M12.5 9.5 V18.5 M10.5 9.5 H14.5 M10.5 18.5 H14.5"/><path d="M17.5 9.5 V18.5 M15.5 9.5 H19.5 M15.5 18.5 H19.5"/></g></svg>
<svg style="left:1149px;top:112px;" width="23" height="20" viewBox="0 0 23 20"><path d="M1 1.5 H10 V9.5 H1 Z" fill="none" stroke="#8a8a8a" stroke-width="1.2"/><path d="M3 5 L5.5 7.5 L11.5 1" fill="none" stroke="#6e6e6e" stroke-width="1.5"/><g stroke="#7a7a7a" stroke-width="1" fill="none"><path d="M13.5 9.5 V18.5 M11.5 9.5 H15.5 M11.5 18.5 H15.5"/><path d="M18.5 9.5 V18.5 M16.5 9.5 H20.5 M16.5 18.5 H20.5"/></g></svg>
<div style="left:1180px;top:110px;width:1px;height:23px;background:#cfcfcf;"></div>
<svg style="left:1192px;top:114px;" width="19" height="16" viewBox="0 0 19 16"><path d="M1 2.5 H13 M1 7.5 H9 M1 12.5 H9" stroke="#6e6e6e" stroke-width="1.7"/><path d="M14.5 6 V14.5 M12 6 H17 M12 14.5 H17" stroke="#6e6e6e" stroke-width="1.2" fill="none"/></svg>
<svg style="left:1226px;top:113px;" width="21" height="20" viewBox="0 0 21 20"><path d="M0.5 1 H17.5 L11 8.5 V16 L7 13.5 V8.5 Z" fill="#6e6e6e"/><path d="M13 16.5 H20 L16.5 20 Z" fill="#333"/></svg>
<div style="left:1270px;top:113.5px;width:16px;height:16px;background:#fff;border:1px solid #767676;box-sizing:border-box;"></div>
<div class="t" style="left:1291.5px;top:112.0px;height:20px;line-height:20px;font-size:13.5px;color:#000;letter-spacing:-0.453px;">Match <u>C</u>ase</div>
<div style="left:1370px;top:113.5px;width:16px;height:16px;background:#fff;border:1px solid #767676;box-sizing:border-box;"></div>
<div class="t" style="left:1391px;top:112.0px;height:20px;line-height:20px;font-size:13.5px;color:#000;letter-spacing:0.047px;">W<u>o</u>rds</div>
<div style="left:1441px;top:113.5px;width:16px;height:16px;background:#fff;border:1px solid #767676;box-sizing:border-box;"></div>
<div class="t" style="left:1463px;top:112.0px;height:20px;line-height:20px;font-size:13.5px;color:#000;letter-spacing:-0.506px;">Rege<u>x</u></div>
<div class="t" style="left:1510px;top:112.0px;height:20px;line-height:20px;font-size:13.5px;color:#2470b3;font-weight:bold;letter-spacing:-1.25px;">?</div>
<div class="t" style="left:1541px;top:113.0px;height:20px;line-height:20px;font-size:13.5px;color:#1a1a1a;font-weight:bold;letter-spacing:-0.309px;">One match</div>
<svg style="left:1876px;top:115px;" width="10" height="10" viewBox="0 0 10 10"><path d="M1 1 L9 9 M9 1 L1 9" stroke="#9a9a9a" stroke-width="1.2" fill="none"/></svg>
<div style="left:456px;top:137px;width:1438px;height:504px;background:#fff;"></div>
<div style="left:457px;top:137px;width:83px;height:504px;background:#f0f0f0;"></div>
<div style="left:457px;top:480.3px;width:1436px;height:24.7px;background:#fffae3;"></div>
<div style="left:457px;top:480.3px;width:83px;height:24.7px;background:#fbf7e1;"></div>
<div style="left:541px;top:480.3px;width:6.5px;height:24.7px;background:#fff;"></div>
<div style="left:540px;top:137px;width:1px;height:504px;background:#d4d4d4;"></div>
<div style="left:541px;top:404.8px;width:43px;height:26.2px;background:#2456a8;"></div>
<div style="left:584px;top:404.8px;width:1309px;height:26.2px;background:#5974ab;"></div>
<div style="left:548px;top:431px;width:1345px;height:49.3px;background:#5974ab;"></div>
<div style="left:1628px;top:137px;width:1px;height:504px;background:#e6e6e6;"></div>
<div style="left:586.0px;top:137px;width:1px;height:444px;background:#e3e3e3;"></div>
<div style="left:622.0px;top:137px;width:1px;height:144px;background:#e3e3e3;"></div>
<div style="left:622.0px;top:356px;width:1px;height:150px;background:#e3e3e3;"></div>
<div style="left:658.0px;top:137px;width:1px;height:119px;background:#e3e3e3;"></div>
<div style="left:658.0px;top:406px;width:1px;height:75px;background:#e3e3e3;"></div>
<div style="left:694.0px;top:181px;width:1px;height:50px;background:#e3e3e3;"></div>
<div style="left:694.0px;top:431px;width:1px;height:50px;background:#e3e3e3;"></div>
<div style="left:730.0px;top:206px;width:1px;height:25px;background:#e3e3e3;"></div>
<div style="left:586.0px;top:405px;width:1px;height:75.3px;background:#c9d1e3;"></div>
<div style="left:622.0px;top:405px;width:1px;height:75.3px;background:#c9d1e3;"></div>
<div style="left:658.0px;top:405px;width:1px;height:75.3px;background:#c9d1e3;"></div>
<div style="left:694.0px;top:431px;width:1px;height:50px;background:#c9d1e3;"></div>
<div style="left:1628px;top:406px;width:1px;height:75px;background:#8c9fc6;"></div>
<div class="t" style="left:692.0px;top:131.8px;height:25px;line-height:25px;font-size:15px;color:#000;font-family:'DejaVu Sans Mono', 'Liberation Mono', monospace;width:1201.0px;overflow:hidden;letter-spacing:-0.031px;">}</div>
<div class="t" style="left:692.0px;top:156.8px;height:25px;line-height:25px;font-size:15px;color:#000;font-family:'DejaVu Sans Mono', 'Liberation Mono', monospace;width:1201.0px;overflow:hidden;letter-spacing:-0.031px;"><span style="color:#000080;font-weight:bold;">catch</span> (BeansException ex) {</div>
<div class="t" style="left:728.0px;top:181.8px;height:25px;line-height:25px;font-size:15px;color:#000;font-family:'DejaVu Sans Mono', 'Liberation Mono', monospace;width:1165.0px;overflow:hidden;letter-spacing:-0.031px;"><span style="color:#000080;font-weight:bold;">throw</span> <span style="color:#000080;font-weight:bold;">new</span> UnsatisfiedDependencyException(</div>
<div class="t" style="left:800.0px;top:206.8px;height:25px;line-height:25px;font-size:15px;color:#000;font-family:'DejaVu Sans Mono', 'Liberation Mono', monospace;width:1093.0px;overflow:hidden;letter-spacing:-0.031px;">mbd.getResourceDescription(), beanName, <span style="color:#000080;font-weight:bold;">new</span> InjectionPoint(methodParam), ex);<span style="color:#8c8c8c;font-style:italic;">  mbd: </span><span style="color:#c77d3a;font-style:italic;">"Root bean: class [com.github.pagram1975.autowiremagic.AlbumService]</span></div>
<div class="t" style="left:692.0px;top:231.8px;height:25px;line-height:25px;font-size:15px;color:#000;font-family:'DejaVu Sans Mono', 'Liberation Mono', monospace;width:1201.0px;overflow:hidden;letter-spacing:-0.031px;">}</div>
<div class="t" style="left:656.0px;top:256.8px;height:25px;line-height:25px;font-size:15px;color:#000;font-family:'DejaVu Sans Mono', 'Liberation Mono', monospace;width:1237.0px;overflow:hidden;letter-spacing:-0.031px;">}</div>
<div class="t" style="left:620.0px;top:281.8px;height:25px;line-height:25px;font-size:15px;color:#000;font-family:'DejaVu Sans Mono', 'Liberation Mono', monospace;width:1273.0px;overflow:hidden;letter-spacing:-0.031px;">}</div>
<div class="t" style="left:620.0px;top:331.8px;height:25px;line-height:25px;font-size:15px;color:#000;font-family:'DejaVu Sans Mono', 'Liberation Mono', monospace;width:1273.0px;overflow:hidden;letter-spacing:-0.031px;"><span style="color:#000080;font-weight:bold;">for</span> (String autowiredBeanName : autowiredBeanNames) {<span style="color:#8c8c8c;font-style:italic;">  autowiredBeanName: </span><span style="color:#c77d3a;font-style:italic;">"conversionService"</span><span style="color:#8c8c8c;font-style:italic;">  autowiredBeanNames:  size = 1</span></div>
<div class="t" style="left:656.0px;top:356.8px;height:25px;line-height:25px;font-size:15px;color:#000;font-family:'DejaVu Sans Mono', 'Liberation Mono', monospace;width:1237.0px;overflow:hidden;letter-spacing:-0.031px;"><span style="color:#000080;font-weight:bold;">this</span>.<span style="color:#660e7a;font-weight:bold;">beanFactory</span>.registerDependentBean(autowiredBeanName, beanName);<span style="color:#8c8c8c;font-style:italic;">  autowiredBeanName: </span><span style="color:#c77d3a;font-style:italic;">"conversionService"</span></div>
<div class="t" style="left:656.0px;top:381.8px;height:25px;line-height:25px;font-size:15px;color:#000;font-family:'DejaVu Sans Mono', 'Liberation Mono', monospace;width:1237.0px;overflow:hidden;letter-spacing:-0.031px;"><span style="color:#000080;font-weight:bold;">if</span> (<span style="color:#660e7a;font-weight:bold;">logger</span>.isDebugEnabled()) {</div>
<div class="t" style="left:692.0px;top:406.8px;height:25px;line-height:25px;font-size:15px;color:#000;font-family:'DejaVu Sans Mono', 'Liberation Mono', monospace;width:1201.0px;overflow:hidden;letter-spacing:-0.031px;"><span style="color:#fff;font-weight:bold;">logger</span><span style="color:#fff;">.debug(</span><span style="color:#fff;font-weight:bold;">"Autowiring by type from bean name '"</span><span style="color:#fff;"> + beanName +</span><span style="color:#a7b5d3;font-style:italic;">  beanName: </span><span style="color:#d18a3e;font-style:italic;">"autowire.AlbumService"</span></div>
<div class="t" style="left:764.0px;top:431.8px;height:25px;line-height:25px;font-size:15px;color:#000;font-family:'DejaVu Sans Mono', 'Liberation Mono', monospace;width:1129.0px;overflow:hidden;letter-spacing:-0.031px;"><span style="color:#fff;font-weight:bold;">"' via "</span><span style="color:#fff;"> + (executable </span><span style="color:#fff;font-weight:bold;">instanceof</span><span style="color:#fff;"> Constructor ? </span><span style="color:#fff;font-weight:bold;">"constructor"</span><span style="color:#fff;"> : </span><span style="color:#fff;font-weight:bold;">"factory method"</span><span style="color:#fff;">) +</span></div>
<div class="t" style="left:764.0px;top:456.8px;height:25px;line-height:25px;font-size:15px;color:#000;font-family:'DejaVu Sans Mono', 'Liberation Mono', monospace;width:1129.0px;overflow:hidden;letter-spacing:-0.031px;"><span style="color:#fff;font-weight:bold;">" to bean named '"</span><span style="color:#fff;"> + autowiredBeanName + </span><span style="color:#fff;font-weight:bold;">"'"</span><span style="color:#fff;">);</span></div>
<div class="t" style="left:656.0px;top:481.8px;height:25px;line-height:25px;font-size:15px;color:#000;font-family:'DejaVu Sans Mono', 'Liberation Mono', monospace;width:1237.0px;overflow:hidden;letter-spacing:-0.031px;">}</div>
<div class="t" style="left:620.0px;top:506.79999999999995px;height:25px;line-height:25px;font-size:15px;color:#000;font-family:'DejaVu Sans Mono', 'Liberation Mono', monospace;width:1273.0px;overflow:hidden;letter-spacing:-0.031px;">}</div>
<div class="t" style="left:620.0px;top:556.8px;height:25px;line-height:25px;font-size:15px;color:#000;font-family:'DejaVu Sans Mono', 'Liberation Mono', monospace;width:1273.0px;overflow:hidden;letter-spacing:-0.031px;"><span style="color:#000080;font-weight:bold;">return</span> args;</div>
<div class="t" style="left:584.0px;top:581.8px;height:25px;line-height:25px;font-size:15px;color:#000;font-family:'DejaVu Sans Mono', 'Liberation Mono', monospace;width:1309.0px;overflow:hidden;letter-spacing:-0.031px;">}</div>
<div class="t" style="left:584.0px;top:631.8px;height:25px;line-height:25px;font-size:15px;color:#000;font-family:'DejaVu Sans Mono', 'Liberation Mono', monospace;width:1309.0px;overflow:hidden;letter-spacing:-0.031px;"><span style="color:#808080;font-style:italic;">/**</span></div>
<div style="left:818px;top:405.2px;width:171px;height:24.6px;border:1.5px solid #000;box-sizing:border-box;"></div>
<div class="t" style="left:471.5px;top:130.3px;height:25px;line-height:25px;font-size:13px;color:#999;font-family:'DejaVu Sans Mono', 'Liberation Mono', monospace;letter-spacing:-0.03px;">795</div>
<div class="t" style="left:471.5px;top:155.3px;height:25px;line-height:25px;font-size:13px;color:#999;font-family:'DejaVu Sans Mono', 'Liberation Mono', monospace;letter-spacing:-0.03px;">796</div>
<div class="t" style="left:471.5px;top:180.3px;height:25px;line-height:25px;font-size:13px;color:#999;font-family:'DejaVu Sans Mono', 'Liberation Mono', monospace;letter-spacing:-0.03px;">797</div>
<div class="t" style="left:471.5px;top:205.3px;height:25px;line-height:25px;font-size:13px;color:#999;font-family:'DejaVu Sans Mono', 'Liberation Mono', monospace;letter-spacing:-0.03px;">798</div>
<div class="t" style="left:471.5px;top:230.3px;height:25px;line-height:25px;font-size:13px;color:#999;font-family:'DejaVu Sans Mono', 'Liberation Mono', monospace;letter-spacing:-0.03px;">799</div>
<div class="t" style="left:471.5px;top:255.3px;height:25px;line-height:25px;font-size:13px;color:#999;font-family:'DejaVu Sans Mono', 'Liberation Mono', monospace;letter-spacing:-0.03px;">800</div>
<div class="t" style="left:471.5px;top:280.3px;height:25px;line-height:25px;font-size:13px;color:#999;font-family:'DejaVu Sans Mono', 'Liberation Mono', monospace;letter-spacing:-0.03px;">801</div>
<div class="t" style="left:471.5px;top:305.3px;height:25px;line-height:25px;font-size:13px;color:#999;font-family:'DejaVu Sans Mono', 'Liberation Mono', monospace;letter-spacing:-0.03px;">802</div>
<div class="t" style="left:471.5px;top:330.3px;height:25px;line-height:25px;font-size:13px;color:#999;font-family:'DejaVu Sans Mono', 'Liberation Mono', monospace;letter-spacing:-0.03px;">803</div>
<div class="t" style="left:471.5px;top:355.3px;height:25px;line-height:25px;font-size:13px;color:#999;font-family:'DejaVu Sans Mono', 'Liberation Mono', monospace;letter-spacing:-0.03px;">804</div>
<div class="t" style="left:471.5px;top:380.3px;height:25px;line-height:25px;font-size:13px;color:#999;font-family:'DejaVu Sans Mono', 'Liberation Mono', monospace;letter-spacing:-0.03px;">805</div>
<div class="t" style="left:471.5px;top:405.3px;height:25px;line-height:25px;font-size:13px;color:#999;font-family:'DejaVu Sans Mono', 'Liberation Mono', monospace;letter-spacing:-0.03px;">806</div>
<div class="t" style="left:471.5px;top:430.3px;height:25px;line-height:25px;font-size:13px;color:#999;font-family:'DejaVu Sans Mono', 'Liberation Mono', monospace;letter-spacing:-0.03px;">807</div>
<div class="t" style="left:471.5px;top:455.3px;height:25px;line-height:25px;font-size:13px;color:#999;font-family:'DejaVu Sans Mono', 'Liberation Mono', monospace;letter-spacing:-0.03px;">808</div>
<div class="t" style="left:471.5px;top:480.3px;height:25px;line-height:25px;font-size:13px;color:#999;font-family:'DejaVu Sans Mono', 'Liberation Mono', monospace;letter-spacing:-0.03px;">809</div>
<div class="t" style="left:471.5px;top:505.29999999999995px;height:25px;line-height:25px;font-size:13px;color:#999;font-family:'DejaVu Sans Mono', 'Liberation Mono', monospace;letter-spacing:-0.03px;">810</div>
<div class="t" style="left:471.5px;top:530.3px;height:25px;line-height:25px;font-size:13px;color:#999;font-family:'DejaVu Sans Mono', 'Liberation Mono', monospace;letter-spacing:-0.03px;">811</div>
<div class="t" style="left:471.5px;top:555.3px;height:25px;line-height:25px;font-size:13px;color:#999;font-family:'DejaVu Sans Mono', 'Liberation Mono', monospace;letter-spacing:-0.03px;">812</div>
<div class="t" style="left:471.5px;top:580.3px;height:25px;line-height:25px;font-size:13px;color:#999;font-family:'DejaVu Sans Mono', 'Liberation Mono', monospace;letter-spacing:-0.03px;">813</div>
<div class="t" style="left:471.5px;top:605.3px;height:25px;line-height:25px;font-size:13px;color:#999;font-family:'DejaVu Sans Mono', 'Liberation Mono', monospace;letter-spacing:-0.03px;">814</div>
<div class="t" style="left:471.5px;top:630.3px;height:25px;line-height:25px;font-size:13px;color:#999;font-family:'DejaVu Sans Mono', 'Liberation Mono', monospace;letter-spacing:-0.03px;">815</div>
<svg style="left:534.7px;top:133.5px;" width="11.7" height="17" viewBox="0 0 11.7 17"><g clip-path="inset(3.6px 0 0 0)"><path d="M0.6 5.4 L5.7 1.3 L10.8 5.4 V13.6 H0.6 Z" fill="#fff" stroke="#c6c6c6" stroke-width="1.2"/><path d="M3.3 9 H8.2" stroke="#b2b2b2" stroke-width="1.1"/></g></svg>
<svg style="left:534.7px;top:233.5px;" width="11.7" height="17" viewBox="0 0 11.7 17"><g><path d="M0.6 5.4 L5.7 1.3 L10.8 5.4 V13.6 H0.6 Z" fill="#fff" stroke="#c6c6c6" stroke-width="1.2"/><path d="M3.3 9 H8.2" stroke="#b2b2b2" stroke-width="1.1"/></g></svg>
<svg style="left:534.7px;top:258.5px;" width="11.7" height="17" viewBox="0 0 11.7 17"><g><path d="M0.6 5.4 L5.7 1.3 L10.8 5.4 V13.6 H0.6 Z" fill="#fff" stroke="#c6c6c6" stroke-width="1.2"/><path d="M3.3 9 H8.2" stroke="#b2b2b2" stroke-width="1.1"/></g></svg>
<svg style="left:534.7px;top:283.5px;" width="11.7" height="17" viewBox="0 0 11.7 17"><g><path d="M0.6 5.4 L5.7 1.3 L10.8 5.4 V13.6 H0.6 Z" fill="#fff" stroke="#c6c6c6" stroke-width="1.2"/><path d="M3.3 9 H8.2" stroke="#b2b2b2" stroke-width="1.1"/></g></svg>
<svg style="left:534.7px;top:483.5px;" width="11.7" height="17" viewBox="0 0 11.7 17"><g><path d="M0.6 5.4 L5.7 1.3 L10.8 5.4 V13.6 H0.6 Z" fill="#fff" stroke="#c6c6c6" stroke-width="1.2"/><path d="M3.3 9 H8.2" stroke="#b2b2b2" stroke-width="1.1"/></g></svg>
<svg style="left:534.7px;top:508.5px;" width="11.7" height="17" viewBox="0 0 11.7 17"><g><path d="M0.6 5.4 L5.7 1.3 L10.8 5.4 V13.6 H0.6 Z" fill="#fff" stroke="#c6c6c6" stroke-width="1.2"/><path d="M3.3 9 H8.2" stroke="#b2b2b2" stroke-width="1.1"/></g></svg>
<svg style="left:534.7px;top:583.5px;" width="11.7" height="17" viewBox="0 0 11.7 17"><g><path d="M0.6 5.4 L5.7 1.3 L10.8 5.4 V13.6 H0.6 Z" fill="#fff" stroke="#c6c6c6" stroke-width="1.2"/><path d="M3.3 9 H8.2" stroke="#b2b2b2" stroke-width="1.1"/></g></svg>
<svg style="left:534.7px;top:158.5px;" width="11.7" height="17" viewBox="0 0 11.7 17"><g><path d="M0.6 4.4 H10.8 V11.6 L5.7 15.8 L0.6 11.6 Z" fill="#fff" stroke="#c6c6c6" stroke-width="1.2"/><path d="M3.3 9 H8.2" stroke="#b2b2b2" stroke-width="1.1"/></g></svg>
<svg style="left:534.7px;top:333.5px;" width="11.7" height="17" viewBox="0 0 11.7 17"><g><path d="M0.6 4.4 H10.8 V11.6 L5.7 15.8 L0.6 11.6 Z" fill="#fff" stroke="#c6c6c6" stroke-width="1.2"/><path d="M3.3 9 H8.2" stroke="#b2b2b2" stroke-width="1.1"/></g></svg>
<svg style="left:534.7px;top:383.5px;" width="11.7" height="17" viewBox="0 0 11.7 17"><g><path d="M0.6 4.4 H10.8 V11.6 L5.7 15.8 L0.6 11.6 Z" fill="#fff" stroke="#c6c6c6" stroke-width="1.2"/><path d="M3.3 9 H8.2" stroke="#b2b2b2" stroke-width="1.1"/></g></svg>
<svg style="left:508px;top:408.5px;" width="18" height="18" viewBox="0 0 18 18"><circle cx="7.6" cy="9.4" r="7.2" fill="#db5860"/><path d="M5.5 7 L8.5 10 L15 2" fill="none" stroke="#fff" stroke-width="2.6"/><path d="M5.5 7 L8.5 10 L15 2" fill="none" stroke="#555" stroke-width="1.2"/></svg>
<div style="left:547px;top:626.5px;width:441px;height:10.5px;background:rgba(0,0,0,0.10);border:1px solid rgba(0,0,0,0.03);box-sizing:border-box;"></div>
<svg style="left:1876.5px;top:138.5px;" width="16" height="13.5" viewBox="0 0 16 13.5"><path d="M1.8 6.3 L5.9 10.4 L14.3 1.7" fill="none" stroke="#4ea35b" stroke-width="2.8"/></svg>
<div style="left:1876px;top:194.3px;width:17px;height:2.6px;background:#fcc6c3;"></div>
<div style="left:1881px;top:500px;width:11.6px;height:45px;background:rgba(0,0,0,0.1);border:1px solid #d9d9d9;box-sizing:border-box;"></div>
<div style="left:1876px;top:533px;width:17px;height:2.4px;background:#2456a8;"></div>
<div style="left:1893px;top:555px;width:1.5px;height:75px;background:#2456a8;"></div>
<div style="left:1890px;top:365px;width:3px;height:1px;background:#aaa;"></div>
<div style="left:1890px;top:368px;width:3px;height:1px;background:#aaa;"></div>
<div style="left:456px;top:641px;width:1438px;height:26px;background:#f2f2f2;"></div>
<div style="left:456px;top:639px;width:1438px;height:1px;background:#f7f2dc;"></div>
<div class="t" style="left:553px;top:644.5px;height:20px;line-height:20px;font-size:15px;color:#6a6a6a;letter-spacing:-0.248px;">ConstructorResolver</div>
<div class="t" style="left:697px;top:643.5px;height:20px;line-height:20px;font-size:15px;color:#8a8a8a;">›</div>
<div class="t" style="left:715px;top:644.5px;height:20px;line-height:20px;font-size:15px;color:#6a6a6a;letter-spacing:-0.027px;">createArgumentArray()</div>
<div style="left:1894px;top:72px;width:26px;height:954px;background:#f2f2f2;"></div>
<div style="left:1893.5px;top:72px;width:1px;height:954px;background:#d4d4d4;"></div>
<div style="left:28px;top:668px;width:1866px;height:357px;background:#f2f2f2;"></div>
<div class="t" style="left:35.5px;top:676.0px;height:20px;line-height:20px;font-size:15px;color:#000;letter-spacing:-0.146px;">Debug:</div>
<svg style="left:106px;top:677px;" width="20.0" height="16.0" viewBox="0 0 20 16"><path d="M1 13 C0 7 3 3 8 3 C10 1 14 0.5 16.5 2.5 C18.5 4 18.5 7 17 8 C16 8.5 15 8 15.5 7 C16.3 6 16 5 15 5 C14 5.5 14.5 8 14 10 V13.5 H11.5 V10.5 H7 V13.5 H4.5 V10 C3.5 10.5 3.5 12 3.5 13.5 Z" fill="#c2c2c2"/></svg>
<svg style="left:121px;top:687px;" width="8" height="8" viewBox="0 0 8 8"><circle cx="4" cy="4" r="3" fill="#59a869" stroke="#f2f2f2" stroke-width="1"/></svg>
<div class="t" style="left:131px;top:676.0px;height:20px;line-height:20px;font-size:15px;color:#000;letter-spacing:0.199px;">autowiring-magic-spring-boot [AutowireMagicA...</div>
<svg style="left:473px;top:681px;" width="10" height="10" viewBox="0 0 10 10"><path d="M1 1 L9 9 M9 1 L1 9" stroke="#a8a8a8" stroke-width="1.2" fill="none"/></svg>
<svg style="left:511px;top:676px;" width="21" height="20" viewBox="0 0 21 20"><rect x="3.5" y="1" width="14" height="11" fill="#e9e9e9" stroke="#a6b0b8" stroke-width="1"/><rect x="1" y="3.5" width="15.5" height="12" fill="#f2f2f2" stroke="#a6b0b8" stroke-width="1.2"/><rect x="2.5" y="9" width="12.5" height="5" fill="#8ed4ef"/><path d="M4 7 H12 M9.5 4.8 L12 7 L9.5 9.2" fill="none" stroke="#555" stroke-width="1.2"/><circle cx="17" cy="15.8" r="3" fill="#3dc44b" stroke="#f2f2f2" stroke-width="0.8"/></svg>
<div class="t" style="left:536px;top:676.0px;height:20px;line-height:20px;font-size:15px;color:#000;letter-spacing:0.122px;">:AutowireMagicApplication.main()</div>
<svg style="left:773px;top:681px;" width="10" height="10" viewBox="0 0 10 10"><path d="M1 1 L9 9 M9 1 L1 9" stroke="#a8a8a8" stroke-width="1.2" fill="none"/></svg>
<div style="left:497px;top:698.8px;width:299px;height:3px;background:#a0abb7;"></div>
<svg style="left:1836px;top:676px;" width="18" height="18" viewBox="0 0 18 18"><rect x="6.9" y="0.6" width="4.2" height="16.8" rx="0.8" transform="rotate(0 9 9)" fill="#6e6e6e"/><rect x="6.9" y="0.6" width="4.2" height="16.8" rx="0.8" transform="rotate(45 9 9)" fill="#6e6e6e"/><rect x="6.9" y="0.6" width="4.2" height="16.8" rx="0.8" transform="rotate(90 9 9)" fill="#6e6e6e"/><rect x="6.9" y="0.6" width="4.2" height="16.8" rx="0.8" transform="rotate(135 9 9)" fill="#6e6e6e"/><circle cx="9" cy="9" r="6.4" fill="#6e6e6e"/><circle cx="9" cy="9" r="2.7" fill="#f2f2f2"/></svg>
<svg style="left:1870px;top:684px;" width="16" height="3" viewBox="0 0 16 3"><rect width="15" height="1.8" fill="#6e6e6e"/></svg>
<div style="left:62.5px;top:703px;width:1px;height:322px;background:#d4d4d4;"></div>
<svg style="left:36px;top:710px;" width="19" height="21" viewBox="0 0 19 21"><path d="M13 4.5 A6.5 6.5 0 1 0 16 11" fill="none" stroke="#59a869" stroke-width="2.2"/><path d="M10.5 0 L16.5 4.8 L10.5 9.5 Z" fill="#59a869"/><rect x="11" y="13" width="6.5" height="6.5" fill="#6e6e6e"/></svg>
<div style="left:33px;top:741px;width:24px;height:1px;background:#d0d0d0;"></div>
<svg style="left:38px;top:751px;" width="16" height="18" viewBox="0 0 16 18"><rect x="0.5" y="1.5" width="3.6" height="15" fill="#59a869"/><path d="M6 1.5 L15.5 9 L6 16.5 Z" fill="#59a869"/></svg>
<svg style="left:39px;top:786px;" width="13" height="15" viewBox="0 0 13 15"><rect x="1" y="0.5" width="3.6" height="14" fill="#c4c4c4"/><rect x="7.6" y="0.5" width="3.6" height="14" fill="#c4c4c4"/></svg>
<div style="left:38.5px;top:819.5px;width:13.5px;height:13.5px;background:#db5860;"></div>
<div style="left:33px;top:846px;width:24px;height:1px;background:#d0d0d0;"></div>
<svg style="left:36px;top:858px;" width="19" height="19" viewBox="0 0 19 19"><circle cx="6.5" cy="11.5" r="5.5" fill="#db5860"/><circle cx="12.5" cy="5.5" r="4.8" fill="#db5860" stroke="#f2f2f2" stroke-width="1.2"/></svg>
<svg style="left:36px;top:891px;" width="19" height="19" viewBox="0 0 19 19"><circle cx="9" cy="10" r="6.3" fill="#db5860"/><path d="M1.5 16.5 L16.5 2.5" stroke="#f2f2f2" stroke-width="4"/><path d="M1.5 16.5 L16.5 2.5" stroke="#6e6e6e" stroke-width="1.5"/></svg>
<div style="left:33px;top:920px;width:24px;height:1px;background:#d0d0d0;"></div>
<svg style="left:36px;top:933px;" width="19" height="16" viewBox="0 0 19 16"><path d="M0.5 3 H5 L6.5 0.5 H12.5 L14 3 H18.5 V15.5 H0.5 Z" fill="#6e6e6e"/><circle cx="9.5" cy="9" r="3.6" fill="none" stroke="#f2f2f2" stroke-width="1.6"/></svg>
<div style="left:33px;top:962px;width:24px;height:1px;background:#d0d0d0;"></div>
<svg style="left:36px;top:974px;" width="17" height="17" viewBox="0 0 18 18"><rect x="6.9" y="0.6" width="4.2" height="16.8" rx="0.8" transform="rotate(0 9 9)" fill="#6e6e6e"/><rect x="6.9" y="0.6" width="4.2" height="16.8" rx="0.8" transform="rotate(45 9 9)" fill="#6e6e6e"/><rect x="6.9" y="0.6" width="4.2" height="16.8" rx="0.8" transform="rotate(90 9 9)" fill="#6e6e6e"/><rect x="6.9" y="0.6" width="4.2" height="16.8" rx="0.8" transform="rotate(135 9 9)" fill="#6e6e6e"/><circle cx="9" cy="9" r="6.4" fill="#6e6e6e"/><circle cx="9" cy="9" r="2.7" fill="#f2f2f2"/></svg>
<svg style="left:49px;top:988px;" width="8" height="5" viewBox="0 0 8 5"><path d="M0.5 0.5 H7.5 L4 4.5 Z" fill="#333"/></svg>
<svg style="left:41.5px;top:1008.5px;" width="10" height="8" viewBox="0 0 10 8"><path d="M1 1 L4 4 L1 7 M5.5 1 L8.5 4 L5.5 7" fill="none" stroke="#666" stroke-width="1.1"/></svg>
<div class="t" style="left:79px;top:710.5px;height:20px;line-height:20px;font-size:13.5px;color:#000;letter-spacing:-0.162px;">Debugger</div>
<div style="left:64px;top:733.7px;width:88px;height:2.2px;background:#7d9ecb;"></div>
<div style="left:63px;top:735.8px;width:1831px;height:1px;background:#d4d4d4;"></div>
<svg style="left:168.5px;top:713.5px;" width="15" height="13" viewBox="0 0 15 13"><rect width="15" height="12.5" fill="#595959"/><path d="M4 3 L7.5 6.2 L4 9.5" fill="none" stroke="#f2f2f2" stroke-width="1.6"/></svg>
<div class="t" style="left:190.5px;top:710.5px;height:20px;line-height:20px;font-size:13.5px;color:#000;letter-spacing:-0.576px;">Console</div>
<svg style="left:253px;top:712px;" width="17" height="15" viewBox="0 0 17 15"><rect x="0" y="1" width="16" height="2" fill="#6e6e6e"/><rect x="0" y="5.5" width="16" height="3.5" fill="#389fd6"/><rect x="0" y="11.5" width="16" height="2" fill="#6e6e6e"/></svg>
<div style="left:280.8px;top:707px;width:1px;height:24px;background:#cfcfcf;"></div>
<svg style="left:294px;top:709px;" width="18" height="19" viewBox="0 0 18 19"><path d="M1.2 10.4 L8 3.4 L14 9.6" fill="none" stroke="#389fd6" stroke-width="2"/><path d="M16.4 5.7 V12.7 H10.2 Z" fill="#389fd6"/><rect x="1.3" y="15" width="15" height="2" fill="#6e6e6e"/></svg>
<svg style="left:327px;top:709.5px;" width="17" height="19" viewBox="0 0 17 19"><path d="M8 1 V10" stroke="#389fd6" stroke-width="2.2"/><path d="M2.5 7 L8 13 L13.5 7 Z" fill="#389fd6"/><rect x="0.5" y="14.5" width="15" height="2" fill="#6e6e6e"/></svg>
<svg style="left:360px;top:709.5px;" width="17" height="19" viewBox="0 0 17 19"><path d="M8 1 V10" stroke="#db5860" stroke-width="2.2"/><path d="M2.5 7 L8 13 L13.5 7 Z" fill="#db5860"/><rect x="0.5" y="14.5" width="15" height="2" fill="#6e6e6e"/></svg>
<svg style="left:392px;top:709.5px;" width="17" height="19" viewBox="0 0 17 19"><path d="M8 13 V4" stroke="#389fd6" stroke-width="2.2"/><path d="M2.5 7 L8 1 L13.5 7 Z" fill="#389fd6"/><rect x="0.5" y="14.5" width="15" height="2" fill="#6e6e6e"/></svg>
<svg style="left:424.5px;top:709.5px;" width="18" height="19" viewBox="0 0 18 19"><path d="M1 1 L8 8 M8 1 L1 8" stroke="#db5860" stroke-width="2.2"/><path d="M6.5 10.5 V17.5 H16 V8 H11" fill="none" stroke="#6e6e6e" stroke-width="1.6"/></svg>
<svg style="left:456px;top:709.3px;" width="20" height="20" viewBox="0 0 20 20"><path d="M1.5 1.5 L9 9" stroke="#389fd6" stroke-width="2.2"/><path d="M4 11 H11 V4 Z" fill="#389fd6"/><path d="M14.5 9 V18.5 M12.5 9 H16.5 M12.5 18.5 H16.5" stroke="#6e6e6e" stroke-width="1.1" fill="none"/></svg>
<div style="left:484.8px;top:707px;width:1px;height:24px;background:#cfcfcf;"></div>
<svg style="left:498px;top:710.3px;" width="17" height="17" viewBox="0 0 17 17"><rect x="1" y="1" width="15" height="15" fill="none" stroke="#6e6e6e" stroke-width="1.6"/><rect x="1" y="1" width="15" height="4" fill="#6e6e6e"/><path d="M6 5 V16 M11 5 V16 M1 10.5 H16" stroke="#6e6e6e" stroke-width="1.3"/></svg>
<svg style="left:531px;top:711.3px;" width="17" height="15" viewBox="0 0 17 15"><path d="M1 3 H6 M9 3 H16 M1 7.5 H16 M1 12 H7 M10 12 H16 M10 1 L6 14" stroke="#c4c4c4" stroke-width="1.5" fill="none"/></svg>
<svg style="left:1867px;top:711px;" width="20" height="17" viewBox="0 0 20 17"><rect x="1" y="1" width="7" height="6" fill="#6e6e6e"/><rect x="9.5" y="1" width="7" height="6" fill="#6e6e6e"/><rect x="1" y="8.5" width="15.5" height="4" fill="#6e6e6e"/><path d="M13 13.5 H19 L16 16.5 Z" fill="#333"/></svg>
<div class="t" style="left:79px;top:744.5px;height:20px;line-height:20px;font-size:13.5px;color:#000;letter-spacing:-0.711px;">Frames</div>
<div class="t" style="left:407.5px;top:744.5px;height:20px;line-height:20px;font-size:13.5px;color:#000;letter-spacing:-0.142px;">Variables</div>
<div style="left:63px;top:770px;width:1831px;height:1px;background:#d4d4d4;"></div>
<div style="left:391px;top:737px;width:1px;height:288px;background:#d4d4d4;"></div>
<div style="left:64px;top:771px;width:327px;height:254px;background:#fff;"></div>
<div style="left:64px;top:771px;width:327px;height:36px;background:#f2f2f2;"></div>
<div style="left:65.5px;top:773.5px;width:222px;height:31px;background:#e4e4e4;border:1px solid #bdbdbd;box-sizing:border-box;"></div>
<svg style="left:75px;top:781px;" width="19" height="16" viewBox="0 0 19 16"><path d="M1.5 8 L6.5 13.5 L17 1.5" fill="none" stroke="#f28b3c" stroke-width="2.6"/></svg>
<div class="t" style="left:98.5px;top:779.5px;height:20px;line-height:20px;font-size:16px;color:#000;letter-spacing:-0.404px;">"main"@1 in group "mai.</div>
<svg style="left:269.5px;top:785.5px;" width="12" height="8" viewBox="0 0 12 8"><path d="M1.2 1.2 L6 6 L10.8 1.2" fill="none" stroke="#6e6e6e" stroke-width="1.5"/></svg>
<svg style="left:300px;top:780px;" width="16" height="18" viewBox="0 0 16 18"><path d="M8 17 V2 M2 8 L8 2 L14 8" fill="none" stroke="#c4c4c4" stroke-width="1.7"/></svg>
<svg style="left:332px;top:780px;" width="16" height="18" viewBox="0 0 16 18"><path d="M8 1 V16 M2 10 L8 16 L14 10" fill="none" stroke="#6e6e6e" stroke-width="1.7"/></svg>
<svg style="left:364px;top:781px;" width="18" height="17" viewBox="0 0 18 17"><path d="M0.5 1 H17.5 L11 8.5 V16 L7 13.5 V8.5 Z" fill="#6e6e6e"/></svg>
<div style="left:64px;top:834px;width:327px;height:191px;background:#ffffe4;"></div>
<div style="left:64px;top:809px;width:327px;height:25px;background:#1c7dc4;"></div>
<div style="left:64px;top:806px;width:327px;height:1px;background:#c9c9c9;"></div>
<div class="t" style="left:74.3px;top:812.1px;height:22px;line-height:22px;font-size:15px;color:#fff;letter-spacing:-0.213px;">createArgumentArray:806, ConstructorResolver</div>
<div class="t" style="left:386.75px;top:812.1px;height:22px;line-height:22px;font-size:15px;color:#fff;font-style:italic;width:4.25px;overflow:hidden;">(org.springframework.beans.factory.support)</div>
<div class="t" style="left:74.3px;top:837.1px;height:22px;line-height:22px;font-size:15px;color:#999;letter-spacing:-0.205px;">autowireConstructor:228, ConstructorResolver</div>
<div class="t" style="left:378.75px;top:837.1px;height:22px;line-height:22px;font-size:15px;color:#999;font-style:italic;width:12.25px;overflow:hidden;">(org.springframework.beans.factory.support)</div>
<div class="t" style="left:74.3px;top:862.1px;height:22px;line-height:22px;font-size:15px;color:#999;letter-spacing:-0.105px;">autowireConstructor:1358, AbstractAutowireCap</div>
<div class="t" style="left:389.75px;top:862.1px;height:22px;line-height:22px;font-size:15px;color:#999;width:1.25px;overflow:hidden;">ableBeanFactory</div>
<div class="t" style="left:74.3px;top:887.1px;height:22px;line-height:22px;font-size:15px;color:#999;letter-spacing:-0.249px;">createBeanInstance:1204, AbstractAutowireCap</div>
<div class="t" style="left:382.7px;top:887.1px;height:22px;line-height:22px;font-size:15px;color:#999;width:8.300000000000011px;overflow:hidden;">ableBeanFactory</div>
<div class="t" style="left:74.3px;top:912.1px;height:22px;line-height:22px;font-size:15px;color:#999;letter-spacing:-0.236px;">doCreateBean:557, AbstractAutowireCapableBe</div>
<div class="t" style="left:385.2px;top:912.1px;height:22px;line-height:22px;font-size:15px;color:#999;width:5.800000000000011px;overflow:hidden;">anFactory</div>
<div class="t" style="left:74.3px;top:937.1px;height:22px;line-height:22px;font-size:15px;color:#999;letter-spacing:-0.159px;">createBean:517, AbstractAutowireCapableBean</div>
<div class="t" style="left:385.2px;top:937.1px;height:22px;line-height:22px;font-size:15px;color:#999;width:5.800000000000011px;overflow:hidden;">Factory</div>
<div class="t" style="left:74.3px;top:962.1px;height:22px;line-height:22px;font-size:15px;color:#999;letter-spacing:-0.216px;">lambda$doGetBean$0:323, AbstractBeanFactor</div>
<div class="t" style="left:384.6px;top:962.1px;height:22px;line-height:22px;font-size:15px;color:#999;width:6.399999999999977px;overflow:hidden;">y</div>
<div class="t" style="left:74.3px;top:987.1px;height:22px;line-height:22px;font-size:15px;color:#999;letter-spacing:-0.199px;">getObject:-1, 1426435610</div>
<div class="t" style="left:249.2px;top:987.1px;height:22px;line-height:22px;font-size:15px;color:#999;font-style:italic;letter-spacing:-0.481px;">(org.springframework.</div>
<div class="t" style="left:385px;top:987.1px;height:22px;line-height:22px;font-size:15px;color:#999;font-style:italic;width:6px;overflow:hidden;">beans.factory</div>
<div class="t" style="left:74.3px;top:1012.1px;height:22px;line-height:22px;font-size:15px;color:#999;letter-spacing:-0.106px;">getSingleton:222, DefaultSingletonBeanRegistry</div>
<div style="left:64px;top:1012.7px;width:122px;height:11.3px;background:rgba(0,0,0,0.10);border:1px solid rgba(0,0,0,0.05);box-sizing:border-box;"></div>
<div style="left:379px;top:808px;width:11.7px;height:51px;background:rgba(0,0,0,0.10);border:1px solid rgba(255,255,255,0.25);box-sizing:border-box;"></div>
<div style="left:392px;top:771px;width:31px;height:254px;background:#f2f2f2;"></div>
<div style="left:422.3px;top:771px;width:1.4px;height:254px;background:#c6c6c6;"></div>
<svg style="left:400px;top:780px;" width="16" height="16" viewBox="0 0 16 16"><path d="M1 8 H15 M8 1 V15" stroke="#6e6e6e" stroke-width="2"/></svg>
<svg style="left:401px;top:818px;" width="14" height="4" viewBox="0 0 14 4"><rect y="1" width="13" height="1.8" fill="#c4c4c4"/></svg>
<svg style="left:400px;top:848px;" width="15" height="9" viewBox="0 0 15 9"><path d="M0.5 8.5 L7.5 1 L14.5 8.5 Z" fill="#c4c4c4"/></svg>
<svg style="left:400px;top:880px;" width="15" height="9" viewBox="0 0 15 9"><path d="M0.5 0.5 L7.5 8 L14.5 0.5 Z" fill="#c4c4c4"/></svg>
<svg style="left:400px;top:909px;" width="16" height="17" viewBox="0 0 16 17"><path d="M1 1 H11 V3 H3 V12 H1 Z" fill="#c9c9c9"/><rect x="4.5" y="4.5" width="10.5" height="11.5" fill="none" stroke="#c4c4c4" stroke-width="1.4"/><path d="M7 8 H12.5 M7 10.5 H12.5 M7 13 H12.5" stroke="#c4c4c4" stroke-width="1.1"/></svg>
<div style="left:394px;top:936px;width:27px;height:28px;background:#d5d5d5;"></div>
<svg style="left:398px;top:945px;" width="20" height="10" viewBox="0 0 20 10"><circle cx="5" cy="5.5" r="3.6" fill="none" stroke="#6e6e6e" stroke-width="1.7"/><circle cx="15" cy="5.5" r="3.6" fill="none" stroke="#6e6e6e" stroke-width="1.7"/><path d="M8.5 4.5 Q10 3.5 11.5 4.5 M1 3 H19" stroke="#6e6e6e" stroke-width="1.5" fill="none"/></svg>
<div style="left:424px;top:771px;width:1470px;height:254px;background:#fff;"></div>
<svg style="left:428.0px;top:777.6999999999999px;" width="9" height="13" viewBox="0 0 9 13"><path d="M1.7 1.2 L6.3 6.3 L1.7 11.4" fill="none" stroke="#9a9a98" stroke-width="2.2"/></svg>
<svg style="left:454.7px;top:777.5px;" width="13" height="15" viewBox="0 0 13 15"><rect x="0" y="0" width="12.7" height="3" fill="#f7cd8d"/><rect x="0" y="4.1" width="12.7" height="3" fill="#f7cd8d"/><rect x="0" y="8.2" width="12.7" height="3" fill="#f7cd8d"/><rect x="0" y="12.2" width="12.7" height="1.6" fill="#fae0b8"/></svg>
<div class="t" style="left:474px;top:775.5px;height:20px;line-height:20px;font-size:15px;color:#1438c8;letter-spacing:0.039px;">this</div>
<div class="t" style="left:497.5px;top:775.5px;height:20px;line-height:20px;font-size:15px;color:#000;letter-spacing:0.13px;"> = </div>
<div class="t" style="left:515px;top:775.5px;height:20px;line-height:20px;font-size:15px;color:#8a8a8a;letter-spacing:-0.321px;">{ConstructorResolver@5420}</div>
<svg style="left:428.0px;top:802.6999999999999px;" width="9" height="13" viewBox="0 0 9 13"><path d="M1.7 1.2 L6.3 6.3 L1.7 11.4" fill="none" stroke="#9a9a98" stroke-width="2.2"/></svg>
<svg style="left:452.2px;top:801.2px;" width="18" height="18" viewBox="0 0 18 18"><circle cx="8.8" cy="8.9" r="8.8" fill="#f6c98b"/><text x="9.4" y="12.3" font-family="Liberation Sans, sans-serif" font-size="13.5" text-anchor="middle" fill="#75654c" stroke="#75654c" stroke-width="0.3">p</text></svg>
<div class="t" style="left:474px;top:800.5px;height:20px;line-height:20px;font-size:15px;color:#8c1818;letter-spacing:-0.049px;">beanName</div>
<div class="t" style="left:547px;top:800.5px;height:20px;line-height:20px;font-size:15px;color:#000;letter-spacing:0.297px;"> = </div>
<div class="t" style="left:565px;top:800.5px;height:20px;line-height:20px;font-size:15px;color:#067d17;font-weight:bold;letter-spacing:-0.201px;">"autowire.AlbumService"</div>
<svg style="left:428.0px;top:827.6999999999999px;" width="9" height="13" viewBox="0 0 9 13"><path d="M1.7 1.2 L6.3 6.3 L1.7 11.4" fill="none" stroke="#9a9a98" stroke-width="2.2"/></svg>
<svg style="left:452.2px;top:826.2px;" width="18" height="18" viewBox="0 0 18 18"><circle cx="8.8" cy="8.9" r="8.8" fill="#f6c98b"/><text x="9.4" y="12.3" font-family="Liberation Sans, sans-serif" font-size="13.5" text-anchor="middle" fill="#75654c" stroke="#75654c" stroke-width="0.3">p</text></svg>
<div class="t" style="left:474px;top:825.5px;height:20px;line-height:20px;font-size:15px;color:#8c1818;letter-spacing:0.271px;">mbd</div>
<div class="t" style="left:504px;top:825.5px;height:20px;line-height:20px;font-size:15px;color:#000;letter-spacing:0.63px;"> = </div>
<div class="t" style="left:523px;top:825.5px;height:20px;line-height:20px;font-size:15px;color:#8a8a8a;letter-spacing:-0.075px;">{RootBeanDefinition@5422}</div>
<div class="t" style="left:709px;top:825.5px;height:20px;line-height:20px;font-size:15px;color:#000;letter-spacing:-0.051px;"> "Root bean: class [com.github.pagram1975.autowiremagic.AlbumService]; scope=singleton; abstract=false; lazyInit=false; autowireMode=0; dependencyCheck=0; autowire</div>
<div class="t" style="left:1843px;top:825.5px;height:20px;line-height:20px;font-size:15px;color:#8a8a8a;letter-spacing:0.161px;">...</div>
<div class="t" style="left:1856px;top:825.5px;height:20px;line-height:20px;font-size:15px;color:#6e9bd0;letter-spacing:-0.284px;"> View</div>
<svg style="left:428.0px;top:852.6999999999999px;" width="9" height="13" viewBox="0 0 9 13"><path d="M1.7 1.2 L6.3 6.3 L1.7 11.4" fill="none" stroke="#9a9a98" stroke-width="2.2"/></svg>
<svg style="left:452.2px;top:851.2px;" width="18" height="18" viewBox="0 0 18 18"><circle cx="8.8" cy="8.9" r="8.8" fill="#f6c98b"/><text x="9.4" y="12.3" font-family="Liberation Sans, sans-serif" font-size="13.5" text-anchor="middle" fill="#75654c" stroke="#75654c" stroke-width="0.3">p</text></svg>
<div class="t" style="left:474px;top:850.5px;height:20px;line-height:20px;font-size:15px;color:#8c1818;letter-spacing:-0.211px;">resolvedValues</div>
<div class="t" style="left:572.5px;top:850.5px;height:20px;line-height:20px;font-size:15px;color:#000;letter-spacing:0.464px;"> = </div>
<div class="t" style="left:591px;top:850.5px;height:20px;line-height:20px;font-size:15px;color:#8a8a8a;letter-spacing:-0.17px;">{ConstructorArgumentValues@5428}</div>
<svg style="left:428.0px;top:877.6999999999999px;" width="9" height="13" viewBox="0 0 9 13"><path d="M1.7 1.2 L6.3 6.3 L1.7 11.4" fill="none" stroke="#9a9a98" stroke-width="2.2"/></svg>
<svg style="left:452.2px;top:876.2px;" width="18" height="18" viewBox="0 0 18 18"><circle cx="8.8" cy="8.9" r="8.8" fill="#f6c98b"/><text x="9.4" y="12.3" font-family="Liberation Sans, sans-serif" font-size="13.5" text-anchor="middle" fill="#75654c" stroke="#75654c" stroke-width="0.3">p</text></svg>
<div class="t" style="left:474px;top:875.5px;height:20px;line-height:20px;font-size:15px;color:#8c1818;letter-spacing:0.406px;">bw</div>
<div class="t" style="left:494px;top:875.5px;height:20px;line-height:20px;font-size:15px;color:#000;letter-spacing:0.464px;"> = </div>
<div class="t" style="left:512.5px;top:875.5px;height:20px;line-height:20px;font-size:15px;color:#8a8a8a;letter-spacing:-0.17px;">{BeanWrapperImpl@5424}</div>
<div class="t" style="left:688px;top:875.5px;height:20px;line-height:20px;font-size:15px;color:#000;letter-spacing:0.008px;"> "org.springframework.beans.BeanWrapperImpl: no wrapped object set"</div>
<svg style="left:428.0px;top:902.6999999999999px;" width="9" height="13" viewBox="0 0 9 13"><path d="M1.7 1.2 L6.3 6.3 L1.7 11.4" fill="none" stroke="#9a9a98" stroke-width="2.2"/></svg>
<svg style="left:452.2px;top:901.2px;" width="18" height="18" viewBox="0 0 18 18"><circle cx="8.8" cy="8.9" r="8.8" fill="#f6c98b"/><text x="9.4" y="12.3" font-family="Liberation Sans, sans-serif" font-size="13.5" text-anchor="middle" fill="#75654c" stroke="#75654c" stroke-width="0.3">p</text></svg>
<div class="t" style="left:474px;top:900.5px;height:20px;line-height:20px;font-size:15px;color:#8c1818;letter-spacing:-0.155px;">paramTypes</div>
<div class="t" style="left:555px;top:900.5px;height:20px;line-height:20px;font-size:15px;color:#000;letter-spacing:0.464px;"> = </div>
<div class="t" style="left:573.5px;top:900.5px;height:20px;line-height:20px;font-size:15px;color:#8a8a8a;letter-spacing:-0.421px;">{Class[2]@5429}</div>
<svg style="left:428.0px;top:927.6999999999999px;" width="9" height="13" viewBox="0 0 9 13"><path d="M1.7 1.2 L6.3 6.3 L1.7 11.4" fill="none" stroke="#9a9a98" stroke-width="2.2"/></svg>
<svg style="left:452.2px;top:926.2px;" width="18" height="18" viewBox="0 0 18 18"><circle cx="8.8" cy="8.9" r="8.8" fill="#f6c98b"/><text x="9.4" y="12.3" font-family="Liberation Sans, sans-serif" font-size="13.5" text-anchor="middle" fill="#75654c" stroke="#75654c" stroke-width="0.3">p</text></svg>
<div class="t" style="left:474px;top:925.5px;height:20px;line-height:20px;font-size:15px;color:#8c1818;letter-spacing:-0.103px;">paramNames</div>
<div class="t" style="left:563px;top:925.5px;height:20px;line-height:20px;font-size:15px;color:#000;letter-spacing:0.464px;"> = </div>
<div class="t" style="left:581.5px;top:925.5px;height:20px;line-height:20px;font-size:15px;color:#8a8a8a;letter-spacing:-0.124px;">{String[2]@5430}</div>
<svg style="left:428.0px;top:952.6999999999999px;" width="9" height="13" viewBox="0 0 9 13"><path d="M1.7 1.2 L6.3 6.3 L1.7 11.4" fill="none" stroke="#9a9a98" stroke-width="2.2"/></svg>
<svg style="left:452.2px;top:951.2px;" width="18" height="18" viewBox="0 0 18 18"><circle cx="8.8" cy="8.9" r="8.8" fill="#f6c98b"/><text x="9.4" y="12.3" font-family="Liberation Sans, sans-serif" font-size="13.5" text-anchor="middle" fill="#75654c" stroke="#75654c" stroke-width="0.3">p</text></svg>
<div class="t" style="left:474px;top:950.5px;height:20px;line-height:20px;font-size:15px;color:#8c1818;letter-spacing:-0.056px;">executable</div>
<div class="t" style="left:546px;top:950.5px;height:20px;line-height:20px;font-size:15px;color:#000;letter-spacing:0.464px;"> = </div>
<div class="t" style="left:564.5px;top:950.5px;height:20px;line-height:20px;font-size:15px;color:#8a8a8a;letter-spacing:-0.259px;">{Constructor@5431}</div>
<div class="t" style="left:696px;top:950.5px;height:20px;line-height:20px;font-size:15px;color:#000;letter-spacing:-0.063px;"> "public com.github.pagram1975.autowiremagic.AlbumService(com.github.pagram1975.autowiremagic.ArtistService,org.springframework.core.convert.ConversionService)"</div>
<svg style="left:452.2px;top:976.2px;" width="18" height="18" viewBox="0 0 18 18"><circle cx="8.8" cy="8.9" r="8.8" fill="#f6c98b"/><text x="9.4" y="12.3" font-family="Liberation Sans, sans-serif" font-size="13.5" text-anchor="middle" fill="#75654c" stroke="#75654c" stroke-width="0.3">p</text></svg>
<div class="t" style="left:474px;top:975.5px;height:20px;line-height:20px;font-size:15px;color:#8c1818;letter-spacing:0.212px;">autowiring</div>
<div class="t" style="left:544.5px;top:975.5px;height:20px;line-height:20px;font-size:15px;color:#000;letter-spacing:0.221px;"> = true</div>
<svg style="left:452.2px;top:1001.2px;" width="18" height="18" viewBox="0 0 18 18"><circle cx="8.8" cy="8.9" r="8.8" fill="#f6c98b"/><text x="9.4" y="12.3" font-family="Liberation Sans, sans-serif" font-size="13.5" text-anchor="middle" fill="#75654c" stroke="#75654c" stroke-width="0.3">p</text></svg>
<div class="t" style="left:474px;top:1000.5px;height:20px;line-height:20px;font-size:15px;color:#8c1818;letter-spacing:0.205px;">fallback</div>
<div class="t" style="left:526.5px;top:1000.5px;height:20px;line-height:20px;font-size:15px;color:#000;letter-spacing:0.15px;"> = true</div>
<div style="left:424px;top:1012.7px;width:289px;height:11px;background:rgba(0,0,0,0.10);border:1px solid rgba(0,0,0,0.05);box-sizing:border-box;"></div>
<div style="left:1882px;top:771px;width:11px;height:137px;background:rgba(0,0,0,0.09);border:1px solid #e2e2e2;box-sizing:border-box;"></div>
<div style="left:28px;top:1025px;width:1892px;height:1px;background:#d0d0d0;"></div>
<div style="left:0px;top:1026px;width:1920px;height:26px;background:#f2f2f2;"></div>
<div style="left:108px;top:1026px;width:98px;height:26px;background:#bfbfbf;"></div>
<svg style="left:40px;top:1034px;" width="13" height="15" viewBox="0 0 13 15"><path d="M1 1 L12 7.5 L1 14 Z" fill="#6e6e6e"/></svg>
<div class="t" style="left:60px;top:1031.6px;height:20px;line-height:20px;font-size:13.5px;color:#000;letter-spacing:-0.714px;"><u>4</u>: Run</div>
<svg style="left:121px;top:1032px;" width="20" height="19" viewBox="0 0 20 19"><ellipse cx="8.5" cy="10" rx="4.6" ry="5.8" fill="#6e6e6e"/><path d="M5.2 4 a3.3 3 0 0 1 6.6 0 Z" fill="#6e6e6e"/><path d="M1 7 H4.5 M1 10.5 H4.5 M1 14 H4.5 M12.5 7 H16 M12.5 10.5 H16 M5 1.5 L6.5 3.5 M12 1.5 L10.5 3.5" stroke="#6e6e6e" stroke-width="1.5"/><circle cx="14" cy="15" r="3" fill="#2fc43f" stroke="#bfbfbf" stroke-width="0.8"/></svg>
<div class="t" style="left:143px;top:1031.6px;height:20px;line-height:20px;font-size:13.5px;color:#000;letter-spacing:-0.287px;"><u>5</u>: Debug</div>
<svg style="left:222px;top:1034px;" width="15" height="13" viewBox="0 0 15 13"><path d="M0 1.5 H2.5 M0 6 H2.5 M0 10.5 H2.5" stroke="#6e6e6e" stroke-width="2"/><path d="M4.5 1.5 H14 M4.5 6 H14 M4.5 10.5 H14" stroke="#6e6e6e" stroke-width="2"/></svg>
<div class="t" style="left:241px;top:1031.6px;height:20px;line-height:20px;font-size:13.5px;color:#000;letter-spacing:-0.576px;"><u>6</u>: TODO</div>
<svg style="left:320px;top:1032px;" width="15" height="17" viewBox="0 0 15 17"><path d="M2.5 1 V16 M2.5 11 C8 11 10.5 9 10.5 4" fill="none" stroke="#6e6e6e" stroke-width="1.8"/><path d="M6.5 6 L10.5 1.5 L14.5 6 Z" fill="#6e6e6e"/></svg>
<div class="t" style="left:340px;top:1031.6px;height:20px;line-height:20px;font-size:13.5px;color:#000;letter-spacing:-0.128px;"><u>9</u>: Version Control</div>
<svg style="left:475px;top:1034px;" width="15" height="13" viewBox="0 0 15 13"><rect width="15" height="12.5" fill="#595959"/><path d="M3 3 L6.5 6.2 L3 9.5 M8 9.8 H12" fill="none" stroke="#f2f2f2" stroke-width="1.5"/></svg>
<div class="t" style="left:495px;top:1031.6px;height:20px;line-height:20px;font-size:13.5px;color:#000;letter-spacing:-0.127px;">Terminal</div>
<svg style="left:1801.5px;top:1031.5px;" width="19" height="19" viewBox="0 0 19 19"><path d="M9 1.3 a7.8 7.8 0 0 1 7.8 7.8 V16.9 H9 a7.8 7.8 0 0 1 0 -15.6 Z" fill="none" stroke="#7a7a7a" stroke-width="1.6"/></svg>
<div class="t" style="left:1824px;top:1031.6px;height:20px;line-height:20px;font-size:13.5px;color:#000;letter-spacing:-0.422px;">Event Log</div>
<div style="left:0px;top:1052px;width:1920px;height:2px;background:#ababab;"></div>
<div style="left:0px;top:1054px;width:1920px;height:26px;background:#f2f2f2;"></div>
<svg style="left:8px;top:1059px;" width="15" height="15" viewBox="0 0 15 15"><path d="M3.5 3.5 V0.5 H14.5 V11.5 H11.5" fill="none" stroke="#8a8a8a"/><rect x="0.5" y="3.5" width="11" height="11" fill="none" stroke="#8a8a8a"/></svg>
<div class="t" style="left:1291px;top:1055.5px;height:20px;line-height:20px;font-size:15px;color:#000;letter-spacing:-0.303px;">210 chars, 3 line breaks</div>
<div class="t" style="left:1463px;top:1055.5px;height:20px;line-height:20px;font-size:15px;color:#000;letter-spacing:-0.709px;">809:1</div>
<div class="t" style="left:1514px;top:1055.5px;height:20px;line-height:20px;font-size:15px;color:#a8a8a8;letter-spacing:-1.758px;">LF</div>
<div class="t" style="left:1543px;top:1055.5px;height:20px;line-height:20px;font-size:15px;color:#a8a8a8;letter-spacing:-0.7px;">UTF-8</div>
<div class="t" style="left:1596px;top:1055.5px;height:20px;line-height:20px;font-size:15px;color:#000;letter-spacing:-0.214px;">Git: master</div>
<div class="t" style="left:1683px;top:1055.5px;height:20px;line-height:20px;font-size:15px;color:#000;letter-spacing:-0.174px;">AWS: No credentials selected</div>
<svg style="left:1890.5px;top:1057px;" width="17" height="17" viewBox="0 0 17 17"><path d="M4.5 5 V2.2 Q4.5 0.5 6.5 0.5 H10.5 Q12.5 0.5 12.5 2.2 V5 H15.5 V6.2 H1 V5 Z" fill="#7a7a7a"/><path d="M4.3 6.2 H12.2 V9 L13 10.5 L12.2 11 V12.8 H9 L7.5 14 H5 Z" fill="#7a7a7a"/><path d="M7.5 6.8 H12 V12 H9.5 L7 11 Z" fill="#f2f2f2"/><circle cx="10.3" cy="8.6" r="0.8" fill="#555"/><path d="M2 16.5 L4.5 13.8 H11.5 L14.5 16.5 Z" fill="#7a7a7a"/></svg>
<div style="left:0px;top:1078px;width:1920px;height:2px;background:#444;"></div>
<svg style="left:1900px;top:84.5px;" width="16.4" height="13.12" viewBox="0 0 20 16"><path d="M1 13 C0 7 3 3 8 3 C10 1 14 0.5 16.5 2.5 C18.5 4 18.5 7 17 8 C16 8.5 15 8 15.5 7 C16.3 6 16 5 15 5 C14 5.5 14.5 8 14 10 V13.5 H11.5 V10.5 H7 V13.5 H4.5 V10 C3.5 10.5 3.5 12 3.5 13.5 Z" fill="#6e6e6e"/></svg>
<div class="t" style="left:0px;top:-10.0px;height:20px;line-height:20px;font-size:13.5px;color:#1a1a1a;letter-spacing:-0.589px;left:1906px;top:105.9px;transform-origin:0 0;transform:rotate(90deg) translate(0,-10px);">Gradle</div>
<svg style="left:1900.5px;top:166.5px;" width="15" height="15.5" viewBox="0 0 15 15.5"><ellipse cx="7.5" cy="2.8" rx="2.2" ry="2.3" fill="#6e6e6e"/><ellipse cx="7.5" cy="7" rx="1.9" ry="2.2" fill="#6e6e6e"/><ellipse cx="7.5" cy="11.8" rx="2.8" ry="3.3" fill="#6e6e6e"/><path d="M1.5 1.5 L6 6.5 M13.5 1.5 L9 6.5 M0.5 8 H6 M14.5 8 H9 M1.5 14.5 L6 8.5 M13.5 14.5 L9 8.5" stroke="#6e6e6e" stroke-width="1.1"/></svg>
<div class="t" style="left:0px;top:-10.0px;height:20px;line-height:20px;font-size:13.5px;color:#1a1a1a;letter-spacing:-0.489px;left:1906px;top:188.2px;transform-origin:0 0;transform:rotate(90deg) translate(0,-10px);">Ant</div>
</body></html>
